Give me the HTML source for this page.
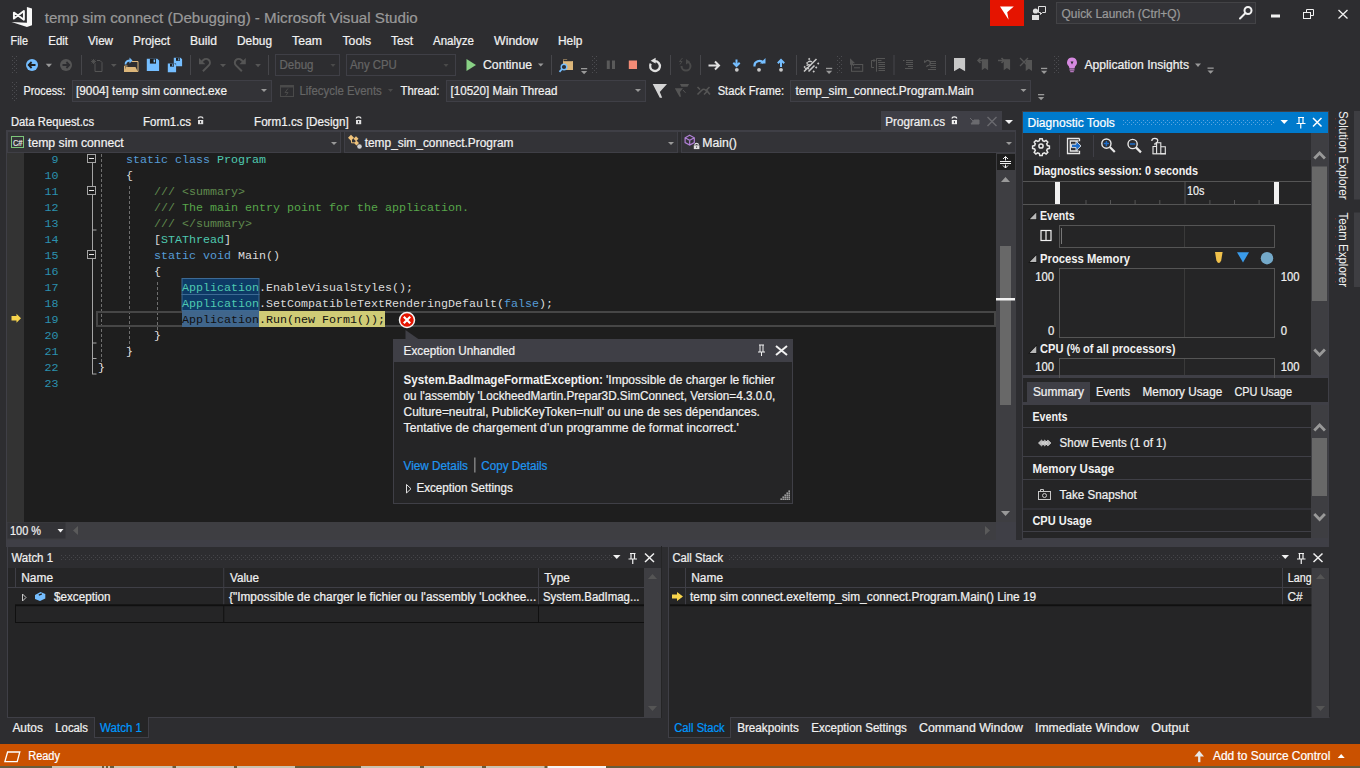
<!DOCTYPE html><html><head><meta charset="utf-8"><style>html,body{margin:0;padding:0;background:#2D2D30;overflow:hidden}svg{display:block}text{font-family:"Liberation Sans",sans-serif;white-space:pre}</style></head><body><svg width="1360" height="768" viewBox="0 0 1360 768"><rect x="0" y="0" width="1360" height="768" fill="#2D2D30" />
<path d="M26.9 6.9 L32 8.6 V25.2 L26.9 27 Z M11.5 22 L27 22.8 V27 Z" fill="#F8F8F8" />
<path d="M13.9 12.6 L23.9 19.8 V11 L13.9 18.6 Z" fill="none" stroke="#F8F8F8" stroke-width="1.9" stroke-linejoin="round"/>
<text x="44.7" y="23" font-size="15" fill="#999999" stroke="#999999" stroke-width="0.22" textLength="373" lengthAdjust="spacingAndGlyphs" >temp sim connect (Debugging) - Microsoft Visual Studio</text>
<rect x="990" y="0" width="34" height="26" fill="#E51400" />
<path d="M1000 6.6 H1013.8 L1007.2 12.3 L1008.6 19.8 Z" fill="#FFFFFF" />
<g fill="#E0E0E0"><circle cx="1035.5" cy="11" r="2.6"/><path d="M1032 20 v-5 h7 v5z"/></g>
<path d="M1038.5 6.5 h7 v6 h-3 l-2 2 v-2 h-2 z" fill="none" stroke="#E0E0E0" stroke-width="1" />
<rect x="1056.5" y="2.5" width="199" height="21" fill="#333337" stroke="#434346" stroke-width="1" />
<text x="1061.6" y="17.6" font-size="12" fill="#999999" stroke="#999999" stroke-width="0.22" textLength="119" lengthAdjust="spacingAndGlyphs" >Quick Launch (Ctrl+Q)</text>
<g stroke="#F1F1F1" fill="none" stroke-width="2"><circle cx="1248" cy="10.5" r="3.5"/><path d="M1245.5 13 L1240 18.5" stroke-linecap="round"/></g>
<rect x="1271" y="14.5" width="9" height="3" fill="#F1F1F1" />
<g fill="none" stroke="#F1F1F1" stroke-width="1"><rect x="1303.5" y="12.5" width="7" height="6"/><path d="M1306.5 12.5 V9.5 H1313.5 V15.5 H1310.5"/></g>
<g stroke="#F1F1F1" stroke-width="1.3"><path d="M1338.5 10 L1347.5 18.5 M1347.5 10 L1338.5 18.5"/></g>
<text x="10.5" y="45" font-size="12" fill="#F1F1F1" stroke="#F1F1F1" stroke-width="0.22" textLength="17.5" lengthAdjust="spacingAndGlyphs" >File</text>
<text x="48.25" y="45" font-size="12" fill="#F1F1F1" stroke="#F1F1F1" stroke-width="0.22" textLength="19.75" lengthAdjust="spacingAndGlyphs" >Edit</text>
<text x="88" y="45" font-size="12" fill="#F1F1F1" stroke="#F1F1F1" stroke-width="0.22" textLength="25" lengthAdjust="spacingAndGlyphs" >View</text>
<text x="133" y="45" font-size="12" fill="#F1F1F1" stroke="#F1F1F1" stroke-width="0.22" textLength="37" lengthAdjust="spacingAndGlyphs" >Project</text>
<text x="190" y="45" font-size="12" fill="#F1F1F1" stroke="#F1F1F1" stroke-width="0.22" textLength="27" lengthAdjust="spacingAndGlyphs" >Build</text>
<text x="237" y="45" font-size="12" fill="#F1F1F1" stroke="#F1F1F1" stroke-width="0.22" textLength="35" lengthAdjust="spacingAndGlyphs" >Debug</text>
<text x="292" y="45" font-size="12" fill="#F1F1F1" stroke="#F1F1F1" stroke-width="0.22" textLength="30" lengthAdjust="spacingAndGlyphs" >Team</text>
<text x="342.5" y="45" font-size="12" fill="#F1F1F1" stroke="#F1F1F1" stroke-width="0.22" textLength="28.5" lengthAdjust="spacingAndGlyphs" >Tools</text>
<text x="391" y="45" font-size="12" fill="#F1F1F1" stroke="#F1F1F1" stroke-width="0.22" textLength="22" lengthAdjust="spacingAndGlyphs" >Test</text>
<text x="433" y="45" font-size="12" fill="#F1F1F1" stroke="#F1F1F1" stroke-width="0.22" textLength="41" lengthAdjust="spacingAndGlyphs" >Analyze</text>
<text x="494" y="45" font-size="12" fill="#F1F1F1" stroke="#F1F1F1" stroke-width="0.22" textLength="44" lengthAdjust="spacingAndGlyphs" >Window</text>
<text x="558" y="45" font-size="12" fill="#F1F1F1" stroke="#F1F1F1" stroke-width="0.22" textLength="24.5" lengthAdjust="spacingAndGlyphs" >Help</text>
<rect x="12" y="56" width="1" height="1" fill="#4C4C50" />
<rect x="16" y="56" width="1" height="1" fill="#4C4C50" />
<rect x="14" y="58" width="1" height="1" fill="#4C4C50" />
<rect x="12" y="60" width="1" height="1" fill="#4C4C50" />
<rect x="16" y="60" width="1" height="1" fill="#4C4C50" />
<rect x="14" y="62" width="1" height="1" fill="#4C4C50" />
<rect x="12" y="64" width="1" height="1" fill="#4C4C50" />
<rect x="16" y="64" width="1" height="1" fill="#4C4C50" />
<rect x="14" y="66" width="1" height="1" fill="#4C4C50" />
<rect x="12" y="68" width="1" height="1" fill="#4C4C50" />
<rect x="16" y="68" width="1" height="1" fill="#4C4C50" />
<rect x="14" y="70" width="1" height="1" fill="#4C4C50" />
<rect x="12" y="72" width="1" height="1" fill="#4C4C50" />
<rect x="16" y="72" width="1" height="1" fill="#4C4C50" />
<circle cx="32" cy="65" r="6" fill="#75BEFF"/>
<path d="M29 65 h6.5 M31.6 62 L28.7 65 L31.6 68" fill="none" stroke="#1E1E1E" stroke-width="1.8" />
<path d="M45.8 63.7h6.2l-3.1 3.6z" fill="#999999" />
<circle cx="66" cy="65" r="6" fill="#555555"/>
<path d="M62.5 65 h6.5 M66.4 62 L69.3 65 L66.4 68" fill="none" stroke="#2D2D30" stroke-width="1.8" />
<line x1="81.5" y1="55" x2="81.5" y2="75" stroke="#46464A" stroke-width="1" />
<path d="M95 63.5 v8 h7 v-9 l-2 -2 h-3" fill="none" stroke="#555555" stroke-width="1" />
<path d="M91 61.5 h5 M93.5 59 v5 M91.7 59.7 l3.6 3.6 M95.3 59.7 l-3.6 3.6" fill="none" stroke="#555555" stroke-width="0.8" />
<path d="M110.9 64h5.8l-2.9 3z" fill="#555555" />
<path d="M131.5 61.5 h6.5 v10 h-2" fill="none" stroke="#DCB67A" stroke-width="1" />
<path d="M124.5 72 l1 -5 h10 l2.5 5z" fill="#DCB67A" />
<path d="M124.5 72 v-6 h3" fill="none" stroke="#DCB67A" stroke-width="1" />
<path d="M125.5 64.5 q0 -4 5 -4" fill="none" stroke="#75BEFF" stroke-width="1.8" />
<path d="M129.5 57.5 l3 3 l-3 3z" fill="#75BEFF" />
<path d="M146.8 58.8 h10.5 l1.8 1.8 v10.5 h-12.3z" fill="#75BEFF" />
<rect x="149.9" y="58.8" width="6.1" height="4.8" fill="#1E1E1E" />
<rect x="153.6" y="59.5" width="1.5" height="2.8" fill="#75BEFF" />
<path d="M173.8 57.8 h6.8 l1.5 1.5 v7 h-6 v-2.7 h-2.3z" fill="#75BEFF" />
<rect x="176" y="57.8" width="4" height="3" fill="#1E1E1E" />
<rect x="178.3" y="58.3" width="1" height="2" fill="#75BEFF" />
<path d="M167.8 63.6 h6.8 l1.5 1.5 v7.1 h-8.3z" fill="#75BEFF" />
<rect x="170" y="63.6" width="4" height="3" fill="#1E1E1E" />
<rect x="172.3" y="64.1" width="1" height="2" fill="#75BEFF" />
<line x1="190.5" y1="55" x2="190.5" y2="75" stroke="#46464A" stroke-width="1" />
<path d="M202.9 71.2 L208.8 65.4 A3.8 3.8 0 0 0 203.4 60 L201.5 61.9" fill="none" stroke="#555555" stroke-width="2" />
<path d="M199 58 V64.3 H205.3 Z" fill="#555555" />
<path d="M220 63.9h6l-3.0 3.3z" fill="#555555" />
<path d="M241.85 71.2 L235.95 65.4 A3.8 3.8 0 0 1 241.35 60 L243.25 61.9" fill="none" stroke="#555555" stroke-width="2" />
<path d="M245.75 58 V64.3 H239.45 Z" fill="#555555" />
<path d="M255.2 63.9h5.7l-2.85 3.3z" fill="#555555" />
<line x1="268.5" y1="55" x2="268.5" y2="75" stroke="#46464A" stroke-width="1" />
<rect x="275.5" y="54.5" width="64" height="21" fill="none" stroke="#3F3F46" stroke-width="1" />
<text x="279.5" y="69" font-size="12" fill="#656565" stroke="#656565" stroke-width="0.22" textLength="34" lengthAdjust="spacingAndGlyphs" >Debug</text>
<path d="M330.5 64h5l-2.5 3z" fill="#4A4A4A" />
<rect x="346.5" y="54.5" width="109" height="21" fill="none" stroke="#3F3F46" stroke-width="1" />
<text x="350" y="69" font-size="12" fill="#656565" stroke="#656565" stroke-width="0.22" textLength="46.75" lengthAdjust="spacingAndGlyphs" >Any CPU</text>
<path d="M443.5 64h5l-2.5 3z" fill="#4A4A4A" />
<path d="M466.5 59 L476 65 L466.5 71 Z" fill="#89D185" />
<text x="483" y="69" font-size="12" fill="#F1F1F1" stroke="#F1F1F1" stroke-width="0.22" textLength="49" lengthAdjust="spacingAndGlyphs" >Continue</text>
<path d="M538 63.5h5.5l-2.75 3z" fill="#999999" />
<line x1="551.5" y1="55" x2="551.5" y2="75" stroke="#46464A" stroke-width="1" />
<path d="M563 59.5 h4 l1 1.5 h5 v9 h-10z" fill="#DCB67A" />
<rect x="563.5" y="60" width="9" height="1.2" fill="#2D2D30" />
<circle cx="564" cy="67" r="2.8" fill="#2D2D30" stroke="#75BEFF" stroke-width="1.4"/>
<path d="M562 69 L559.5 71.8" fill="none" stroke="#75BEFF" stroke-width="1.8" />
<rect x="581" y="68" width="6.2" height="1.3" fill="#999999" />
<path d="M581 71h6.2l-3.1 3.2z" fill="#999999" />
<rect x="592" y="56" width="1" height="1" fill="#4C4C50" />
<rect x="596" y="56" width="1" height="1" fill="#4C4C50" />
<rect x="594" y="58" width="1" height="1" fill="#4C4C50" />
<rect x="592" y="60" width="1" height="1" fill="#4C4C50" />
<rect x="596" y="60" width="1" height="1" fill="#4C4C50" />
<rect x="594" y="62" width="1" height="1" fill="#4C4C50" />
<rect x="592" y="64" width="1" height="1" fill="#4C4C50" />
<rect x="596" y="64" width="1" height="1" fill="#4C4C50" />
<rect x="594" y="66" width="1" height="1" fill="#4C4C50" />
<rect x="592" y="68" width="1" height="1" fill="#4C4C50" />
<rect x="596" y="68" width="1" height="1" fill="#4C4C50" />
<rect x="594" y="70" width="1" height="1" fill="#4C4C50" />
<rect x="592" y="72" width="1" height="1" fill="#4C4C50" />
<rect x="596" y="72" width="1" height="1" fill="#4C4C50" />
<rect x="606.8" y="60.5" width="3" height="8.5" fill="#5A5A5A" />
<rect x="612" y="60.5" width="3" height="8.5" fill="#5A5A5A" />
<rect x="628.8" y="60.5" width="8.2" height="8.5" fill="#F38B76" />
<path d="M655 61.2 A4.9 4.9 0 1 1 650.76 63.65" fill="none" stroke="#E0E0E0" stroke-width="2.3" />
<path d="M650.6 60.7 L655.6 57.8 L655.6 63.6 Z" fill="#E0E0E0" />
<line x1="670.5" y1="55" x2="670.5" y2="75" stroke="#46464A" stroke-width="1" />
<path d="M686 61.6 A4.5 4.5 0 1 1 681.5 66.1" fill="none" stroke="#4A4A4A" stroke-width="2" />
<path d="M690 61.8 L686 59 L686 64.6 Z" fill="#4A4A4A" />
<path d="M682.5 58 l-3 3.5 h2.5 l-2 3" fill="none" stroke="#4A4A4A" stroke-width="1" />
<line x1="700.5" y1="55" x2="700.5" y2="75" stroke="#46464A" stroke-width="1" />
<path d="M708.5 65.5 H719 M715 61.5 L719 65.5 L715 69.5" fill="none" stroke="#E0E0E0" stroke-width="2" />
<path d="M736.5 59.5 V66 M733.3 62.8 L736.5 66 L739.7 62.8" fill="none" stroke="#75BEFF" stroke-width="2" />
<circle cx="736.8" cy="69.8" r="1.9" fill="#C8C8C8"/>
<path d="M754.5 66.5 A5 5 0 0 1 763.5 63" fill="none" stroke="#75BEFF" stroke-width="2.2" />
<path d="M760 63.5 h5.5 v-5.5z" fill="#75BEFF" />
<circle cx="759" cy="69.8" r="1.9" fill="#C8C8C8"/>
<path d="M781 67 V60 M777.8 63.2 L781 60 L784.2 63.2" fill="none" stroke="#75BEFF" stroke-width="2" />
<circle cx="781" cy="69.8" r="1.9" fill="#C8C8C8"/>
<line x1="796.5" y1="55" x2="796.5" y2="75" stroke="#46464A" stroke-width="1" />
<path d="M804 71.5 L816.5 59 M808.5 71.5 L814.5 65.5" fill="none" stroke="#C8C8C8" stroke-width="1.6" />
<path d="M808 62 q2 -1.5 4 0 M806.5 65.5 q2 -1.5 4 0 M805 69 q2 -1.5 4 0" fill="none" stroke="#C8C8C8" stroke-width="1.4" />
<path d="M808 59 l1.2 -1.2 l1.2 1.2 l-1.2 1.2z" fill="#C8C8C8" />
<path d="M806 63 l1.2 -1.2 l1.2 1.2 l-1.2 1.2z" fill="#C8C8C8" />
<path d="M803.5 67 l1.2 -1.2 l1.2 1.2 l-1.2 1.2z" fill="#C8C8C8" />
<path d="M817 63.5 l1.2 -1.2 l1.2 1.2 l-1.2 1.2z" fill="#C8C8C8" />
<path d="M815 67.5 l1.2 -1.2 l1.2 1.2 l-1.2 1.2z" fill="#C8C8C8" />
<path d="M812.5 71.5 l1.2 -1.2 l1.2 1.2 l-1.2 1.2z" fill="#C8C8C8" />
<rect x="826" y="67.8" width="6.2" height="1.3" fill="#999999" />
<path d="M826 70.8h6.2l-3.1 3.2z" fill="#999999" />
<rect x="837" y="56" width="1" height="1" fill="#4C4C50" />
<rect x="841" y="56" width="1" height="1" fill="#4C4C50" />
<rect x="839" y="58" width="1" height="1" fill="#4C4C50" />
<rect x="837" y="60" width="1" height="1" fill="#4C4C50" />
<rect x="841" y="60" width="1" height="1" fill="#4C4C50" />
<rect x="839" y="62" width="1" height="1" fill="#4C4C50" />
<rect x="837" y="64" width="1" height="1" fill="#4C4C50" />
<rect x="841" y="64" width="1" height="1" fill="#4C4C50" />
<rect x="839" y="66" width="1" height="1" fill="#4C4C50" />
<rect x="837" y="68" width="1" height="1" fill="#4C4C50" />
<rect x="841" y="68" width="1" height="1" fill="#4C4C50" />
<rect x="839" y="70" width="1" height="1" fill="#4C4C50" />
<rect x="837" y="72" width="1" height="1" fill="#4C4C50" />
<rect x="841" y="72" width="1" height="1" fill="#4C4C50" />
<path d="M850 58.3 v7 l1.8 -1.6 l1.3 2.3 l1 -0.5 l-1.3 -2.3 h2.4z" fill="#555555" />
<rect x="851.5" y="64.5" width="11.2" height="6.8" fill="none" stroke="#555555" stroke-width="1" />
<line x1="854" y1="67.8" x2="860" y2="67.8" stroke="#555555" stroke-width="1" />
<path d="M874 60.5 h-2.5 v7 h2.5 M872.5 60.5 h3 M874 59 v3" fill="none" stroke="#555555" stroke-width="1" />
<line x1="876.5" y1="58.3" x2="876.5" y2="71.7" stroke="#555555" stroke-width="1" />
<path d="M876.5 58.5 H885 M878 60.5 h3.5 M878 62.5 h7 M878.5 64.5 h6.5 M878.5 66.5 h6.5 M878.5 68.5 h6.5 M878.5 70.5 h6.5" fill="none" stroke="#555555" stroke-width="1" />
<line x1="894.0" y1="55" x2="894.0" y2="75" stroke="#46464A" stroke-width="1" />
<path d="M903 60.5 h1.5 M906 60.5 h7 M906 62.5 h7 M906 64.5 h7 M908 66.5 h5 M905 68.5 h8" fill="none" stroke="#555555" stroke-width="1" />
<path d="M925.5 62 A2.5 2.5 0 1 1 927.5 65.5 L926.5 67" fill="none" stroke="#555555" stroke-width="1.2" />
<path d="M924 60 l0 3 l2.5 -1z" fill="#555555" />
<path d="M930 61.5 h6 M930 63.5 h6 M930 65.5 h6 M930.5 67.5 h5.5 M928 69.5 h8" fill="none" stroke="#555555" stroke-width="1" />
<line x1="945.5" y1="55" x2="945.5" y2="75" stroke="#46464A" stroke-width="1" />
<path d="M954 57.9 h11.1 v13.4 l-5.55 -3.3 l-5.55 3.3z" fill="#C8C8C8" />
<path d="M981.8 59.2 h6.3 v11 l-3.15 -2.2 l-3.15 2.2z" fill="#555555" />
<path d="M984 60.5 h-6 M980.5 58 l-2.5 2.5 l2.5 2.5" fill="none" stroke="#555555" stroke-width="1.5" />
<path d="M1003.7 59.2 h6.4 v11 l-3.2 -2.2 l-3.2 2.2z" fill="#555555" />
<path d="M998 60.5 h6 M1001.5 58 l2.5 2.5 l-2.5 2.5" fill="none" stroke="#555555" stroke-width="1.5" />
<path d="M1025.7 60 h6.3 v11 l-3.15 -2.2 l-3.15 2.2z" fill="#555555" />
<path d="M1020 58 l8 8 M1028 58 l-8 8" fill="none" stroke="#555555" stroke-width="1.3" />
<rect x="1041" y="67.8" width="6.2" height="1.3" fill="#999999" />
<path d="M1041 70.8h6.2l-3.1 3.2z" fill="#999999" />
<rect x="1054" y="56" width="1" height="1" fill="#4C4C50" />
<rect x="1058" y="56" width="1" height="1" fill="#4C4C50" />
<rect x="1056" y="58" width="1" height="1" fill="#4C4C50" />
<rect x="1054" y="60" width="1" height="1" fill="#4C4C50" />
<rect x="1058" y="60" width="1" height="1" fill="#4C4C50" />
<rect x="1056" y="62" width="1" height="1" fill="#4C4C50" />
<rect x="1054" y="64" width="1" height="1" fill="#4C4C50" />
<rect x="1058" y="64" width="1" height="1" fill="#4C4C50" />
<rect x="1056" y="66" width="1" height="1" fill="#4C4C50" />
<rect x="1054" y="68" width="1" height="1" fill="#4C4C50" />
<rect x="1058" y="68" width="1" height="1" fill="#4C4C50" />
<rect x="1056" y="70" width="1" height="1" fill="#4C4C50" />
<rect x="1054" y="72" width="1" height="1" fill="#4C4C50" />
<rect x="1058" y="72" width="1" height="1" fill="#4C4C50" />
<path d="M1072 57.5 a5 5 0 0 1 3.2 8.8 l-0.7 2.2 h-5 l-0.7 -2.2 a5 5 0 0 1 3.2 -8.8z" fill="#D689E0" />
<path d="M1070.5 61.5 h3 l-1.5 3z" fill="#2D2D30" />
<rect x="1069.5" y="69.3" width="5" height="1.2" fill="#D689E0" />
<rect x="1070.2" y="71.2" width="3.6" height="1" fill="#D689E0" />
<text x="1084.4" y="68.75" font-size="12" fill="#F1F1F1" stroke="#F1F1F1" stroke-width="0.22" textLength="104.6" lengthAdjust="spacingAndGlyphs" >Application Insights</text>
<path d="M1195 63.5h6l-3.0 3.5z" fill="#999999" />
<rect x="1207.5" y="67.5" width="6.2" height="1.3" fill="#999999" />
<path d="M1207.5 70.5h6.2l-3.1 3.2z" fill="#999999" />
<rect x="12" y="82" width="1" height="1" fill="#4C4C50" />
<rect x="16" y="82" width="1" height="1" fill="#4C4C50" />
<rect x="14" y="84" width="1" height="1" fill="#4C4C50" />
<rect x="12" y="86" width="1" height="1" fill="#4C4C50" />
<rect x="16" y="86" width="1" height="1" fill="#4C4C50" />
<rect x="14" y="88" width="1" height="1" fill="#4C4C50" />
<rect x="12" y="90" width="1" height="1" fill="#4C4C50" />
<rect x="16" y="90" width="1" height="1" fill="#4C4C50" />
<rect x="14" y="92" width="1" height="1" fill="#4C4C50" />
<rect x="12" y="94" width="1" height="1" fill="#4C4C50" />
<rect x="16" y="94" width="1" height="1" fill="#4C4C50" />
<rect x="14" y="96" width="1" height="1" fill="#4C4C50" />
<rect x="12" y="98" width="1" height="1" fill="#4C4C50" />
<rect x="16" y="98" width="1" height="1" fill="#4C4C50" />
<rect x="14" y="100" width="1" height="1" fill="#4C4C50" />
<text x="23.5" y="95" font-size="12" fill="#F1F1F1" stroke="#F1F1F1" stroke-width="0.22" textLength="42" lengthAdjust="spacingAndGlyphs" >Process:</text>
<rect x="72.5" y="80.5" width="199" height="21" fill="#333337" stroke="#3F3F46" stroke-width="1" />
<text x="76" y="95" font-size="12" fill="#F1F1F1" stroke="#F1F1F1" stroke-width="0.22" textLength="151" lengthAdjust="spacingAndGlyphs" >[9004] temp sim connect.exe</text>
<path d="M261 89h6l-3.0 3z" fill="#999999" />
<rect x="280.5" y="85.5" width="13" height="11" fill="none" stroke="#4A4A4A" stroke-width="1" />
<rect x="280.5" y="85.5" width="13" height="2" fill="#4A4A4A" />
<path d="M288 88.5 l-3 4 h3 l-2 3" fill="none" stroke="#4A4A4A" stroke-width="1" />
<text x="299.5" y="95" font-size="12" fill="#656565" stroke="#656565" stroke-width="0.22" textLength="82.25" lengthAdjust="spacingAndGlyphs" >Lifecycle Events</text>
<path d="M388 89h5l-2.5 3z" fill="#4A4A4A" />
<text x="400.5" y="95" font-size="12" fill="#F1F1F1" stroke="#F1F1F1" stroke-width="0.22" textLength="39" lengthAdjust="spacingAndGlyphs" >Thread:</text>
<rect x="446.5" y="80.5" width="199" height="21" fill="#333337" stroke="#3F3F46" stroke-width="1" />
<text x="450.5" y="95" font-size="12" fill="#F1F1F1" stroke="#F1F1F1" stroke-width="0.22" textLength="107" lengthAdjust="spacingAndGlyphs" >[10520] Main Thread</text>
<path d="M635 89h6l-3.0 3z" fill="#999999" />
<path d="M652.7 84.1 H667 L659.8 92 L662.2 97.8 H659.8 Z" fill="#D4D4D4" />
<path d="M680 84 H689.1 L687.5 86.8 H681.4 Z" fill="#555555" />
<path d="M674.8 88.2 H683 L680 92 L681 96.8 H679.5 Z" fill="#555555" />
<path d="M683 90 L685.5 92.8" fill="none" stroke="#555555" stroke-width="1" />
<path d="M697.5 87 L700 89.5 M697.5 94.5 L701.5 90.5 Q704 88 706 90.5 L709.5 87 M704 94.5 L708 90.5 M707.5 91.5 L710 94.5" fill="none" stroke="#555555" stroke-width="1.6" />
<text x="717.7" y="95" font-size="12" fill="#F1F1F1" stroke="#F1F1F1" stroke-width="0.22" textLength="66.3" lengthAdjust="spacingAndGlyphs" >Stack Frame:</text>
<rect x="790.5" y="80.5" width="240" height="21" fill="#333337" stroke="#3F3F46" stroke-width="1" />
<text x="795.5" y="95" font-size="12" fill="#F1F1F1" stroke="#F1F1F1" stroke-width="0.22" textLength="178.2" lengthAdjust="spacingAndGlyphs" >temp_sim_connect.Program.Main</text>
<path d="M1020.5 89h6l-3.0 3z" fill="#999999" />
<rect x="1038" y="94" width="6.2" height="1.3" fill="#999999" />
<path d="M1038 97h6.2l-3.1 3.2z" fill="#999999" />
<text x="11" y="126" font-size="12" fill="#F1F1F1" stroke="#F1F1F1" stroke-width="0.22" textLength="83" lengthAdjust="spacingAndGlyphs" >Data Request.cs</text>
<text x="143" y="126" font-size="12" fill="#F1F1F1" stroke="#F1F1F1" stroke-width="0.22" textLength="48" lengthAdjust="spacingAndGlyphs" >Form1.cs</text>
<path d="M198.3 118.6 a2.3 1.8 0 0 1 4.6 0" fill="none" stroke="#E0E0E0" stroke-width="1.3" />
<rect x="198" y="120" width="5.2" height="4.2" fill="#E0E0E0" />
<rect x="200.1" y="121" width="1" height="2.2" fill="#2D2D30" />
<text x="254" y="126" font-size="12" fill="#F1F1F1" stroke="#F1F1F1" stroke-width="0.22" textLength="94.7" lengthAdjust="spacingAndGlyphs" >Form1.cs [Design]</text>
<path d="M356.3 118.6 a2.3 1.8 0 0 1 4.6 0" fill="none" stroke="#E0E0E0" stroke-width="1.3" />
<rect x="356" y="120" width="5.2" height="4.2" fill="#E0E0E0" />
<rect x="358.1" y="121" width="1" height="2.2" fill="#2D2D30" />
<rect x="881" y="111" width="121" height="19" fill="#3F3F46" />
<text x="885.3" y="126" font-size="12" fill="#F1F1F1" stroke="#F1F1F1" stroke-width="0.22" textLength="59.7" lengthAdjust="spacingAndGlyphs" >Program.cs</text>
<path d="M952.0999999999999 118.6 a2.3 1.8 0 0 1 4.6 0" fill="none" stroke="#F1F1F1" stroke-width="1.3" />
<rect x="951.8" y="120" width="5.2" height="4.2" fill="#F1F1F1" />
<rect x="953.9" y="121" width="1" height="2.2" fill="#3F3F46" />
<path d="M970 118 l3 3 M971 124 h8 v-4 h-5z" fill="#6A6A6F" stroke="#6A6A6F" stroke-width="1" />
<path d="M987.5 117 L996.5 126 M996.5 117 L987.5 126" fill="none" stroke="#6A6A6F" stroke-width="1.4" />
<path d="M1005 120 h8 l-4 4z" fill="#F1F1F1" />
<rect x="6" y="130" width="1010" height="411" fill="#3F3F46" />
<rect x="7" y="132" width="1009" height="21" fill="#2D2D30" />
<rect x="7.5" y="131.5" width="333" height="21" fill="#333337" stroke="#3F3F46" stroke-width="1" />
<rect x="344.5" y="131.5" width="333" height="21" fill="#333337" stroke="#3F3F46" stroke-width="1" />
<rect x="681.5" y="131.5" width="334" height="21" fill="#333337" stroke="#3F3F46" stroke-width="1" />
<rect x="11.5" y="136.5" width="12" height="11" fill="none" stroke="#7CC57A" stroke-width="1" />
<text x="13" y="146" font-size="9" fill="#E0E0E0" stroke="#E0E0E0" stroke-width="0.22" textLength="9.5" lengthAdjust="spacingAndGlyphs" >C#</text>
<text x="28" y="147" font-size="12" fill="#F1F1F1" stroke="#F1F1F1" stroke-width="0.22" textLength="95.75" lengthAdjust="spacingAndGlyphs" >temp sim connect</text>
<path d="M331 142h6l-3.0 3z" fill="#999999" />
<path d="M348 137.8 l3 -3 l3 3 l-3 3z M353.5 138.7 l2.5 -2.5 l2.5 2.5 l-2.5 2.5z M354 143 l2.5 -2.5 l2.5 2.5 l-2.5 2.5z" fill="#EFC27A" />
<path d="M351.5 140 v2.8 h3" fill="none" stroke="#EFC27A" stroke-width="1" />
<circle cx="359.5" cy="146.5" r="2.3" fill="#D0D0D0"/>
<text x="364.7" y="147" font-size="12" fill="#F1F1F1" stroke="#F1F1F1" stroke-width="0.22" textLength="148.8" lengthAdjust="spacingAndGlyphs" >temp_sim_connect.Program</text>
<path d="M668 142h6l-3.0 3z" fill="#999999" />
<path d="M689.7 135.3 L694.3 137.8 V142.6 L689.7 145.1 L685.1 142.6 V137.8 Z M685.1 137.8 L689.7 140.3 L694.3 137.8 M689.7 140.3 V145" fill="none" stroke="#B180D7" stroke-width="1.2" />
<path d="M694.8 145 a1.8 1.6 0 0 1 3.6 0" fill="none" stroke="#E0E0E0" stroke-width="1.1" />
<rect x="693.8" y="145.3" width="5.6" height="3.8" fill="#E0E0E0" />
<rect x="696.2" y="146.5" width="0.9" height="1.3" fill="#333337" />
<text x="702.2" y="147" font-size="12" fill="#F1F1F1" stroke="#F1F1F1" stroke-width="0.22" textLength="34.7" lengthAdjust="spacingAndGlyphs" >Main()</text>
<path d="M1006 142h6l-3.0 3z" fill="#999999" />
<rect x="7" y="153" width="990" height="369" fill="#1E1E1E" />
<rect x="7" y="153" width="17" height="369" fill="#333333" />
<rect x="996" y="153" width="20" height="369" fill="#3E3E42" />
<rect x="997" y="154" width="18" height="16" fill="#1E1E1E" />
<path d="M1005.5 156.5 V160.5 M1005.5 164.5 V168 M1003 159 L1005.5 156.5 L1008 159 M1003 165.5 L1005.5 168 L1008 165.5 M1000 161.5 H1011 M1000 163.5 H1011" fill="none" stroke="#F1F1F1" stroke-width="1" />
<path d="M1001 182 l4.5 -5 l4.5 5z" fill="#999999" />
<rect x="1000" y="246" width="11" height="159" fill="#686868" />
<rect x="996" y="298" width="19" height="2.5" fill="#F1F1F1" />
<path d="M1001 511 h9 l-4.5 5z" fill="#999999" />
<rect x="7" y="522" width="989" height="19" fill="#3E3E42" />
<rect x="7.5" y="522.5" width="58" height="16" fill="#333337" />
<text x="10" y="535" font-size="12" fill="#F1F1F1" stroke="#F1F1F1" stroke-width="0.22" textLength="31" lengthAdjust="spacingAndGlyphs" >100 %</text>
<path d="M57.5 529h6l-3.0 3.5z" fill="#F1F1F1" />
<path d="M78 526 v9 l-5 -4.5z" fill="#5A5A5A" />
<path d="M985 526 v9 l5 -4.5z" fill="#5A5A5A" />
<path d="M11.5 316 h5 v-2.3 l4.5 4.5 l-4.5 4.5 v-2.3 h-5z" fill="#FFCC00" style="fill:#F7D44C"/>
<line x1="92.5" y1="163" x2="92.5" y2="374" stroke="#A5A5A5" stroke-width="1" />
<line x1="92" y1="230" x2="96.5" y2="230" stroke="#A5A5A5" stroke-width="1" />
<line x1="92" y1="343" x2="96.5" y2="343" stroke="#A5A5A5" stroke-width="1" />
<line x1="92" y1="358.5" x2="96.5" y2="358.5" stroke="#A5A5A5" stroke-width="1" />
<line x1="92" y1="374" x2="96.5" y2="374" stroke="#A5A5A5" stroke-width="1" />
<rect x="87.5" y="154.5" width="8" height="8" fill="#1E1E1E" stroke="#A5A5A5" stroke-width="1" />
<line x1="89" y1="158.5" x2="94" y2="158.5" stroke="#E8E8E8" stroke-width="1" />
<rect x="87.5" y="186.5" width="8" height="8" fill="#1E1E1E" stroke="#A5A5A5" stroke-width="1" />
<line x1="89" y1="190.5" x2="94" y2="190.5" stroke="#E8E8E8" stroke-width="1" />
<rect x="87.5" y="250.5" width="8" height="8" fill="#1E1E1E" stroke="#A5A5A5" stroke-width="1" />
<line x1="89" y1="254.5" x2="94" y2="254.5" stroke="#E8E8E8" stroke-width="1" />
<line x1="101.5" y1="154" x2="101.5" y2="373" stroke="#6E6E6E" stroke-width="1" stroke-dasharray="3,2"/>
<line x1="129.5" y1="186" x2="129.5" y2="357" stroke="#6E6E6E" stroke-width="1" stroke-dasharray="3,2"/>
<line x1="157.5" y1="282" x2="157.5" y2="341" stroke="#6E6E6E" stroke-width="1" stroke-dasharray="3,2"/>
<rect x="97" y="312" width="898" height="14" fill="none" stroke="#464646" stroke-width="2" />
<rect x="182" y="278.5" width="77" height="16" fill="#0E3A66" stroke="#3D6A94" stroke-width="1" />
<rect x="182" y="294.5" width="77" height="16" fill="#0E3A66" stroke="#3D6A94" stroke-width="1" />
<rect x="182" y="311" width="77" height="16" fill="#40668C" />
<rect x="259" y="311" width="126" height="16" fill="#CFCB76" />
<text x="51.5" y="162.5" font-size="11.2" fill="#2B91AF" style='font-family:"Liberation Mono", monospace' textLength="7.0" lengthAdjust="spacingAndGlyphs" >9</text>
<text x="44.5" y="178.5" font-size="11.2" fill="#2B91AF" style='font-family:"Liberation Mono", monospace' textLength="14.0" lengthAdjust="spacingAndGlyphs" >10</text>
<text x="44.5" y="194.5" font-size="11.2" fill="#2B91AF" style='font-family:"Liberation Mono", monospace' textLength="14.0" lengthAdjust="spacingAndGlyphs" >11</text>
<text x="44.5" y="210.5" font-size="11.2" fill="#2B91AF" style='font-family:"Liberation Mono", monospace' textLength="14.0" lengthAdjust="spacingAndGlyphs" >12</text>
<text x="44.5" y="226.5" font-size="11.2" fill="#2B91AF" style='font-family:"Liberation Mono", monospace' textLength="14.0" lengthAdjust="spacingAndGlyphs" >13</text>
<text x="44.5" y="242.5" font-size="11.2" fill="#2B91AF" style='font-family:"Liberation Mono", monospace' textLength="14.0" lengthAdjust="spacingAndGlyphs" >14</text>
<text x="44.5" y="258.5" font-size="11.2" fill="#2B91AF" style='font-family:"Liberation Mono", monospace' textLength="14.0" lengthAdjust="spacingAndGlyphs" >15</text>
<text x="44.5" y="274.5" font-size="11.2" fill="#2B91AF" style='font-family:"Liberation Mono", monospace' textLength="14.0" lengthAdjust="spacingAndGlyphs" >16</text>
<text x="44.5" y="290.5" font-size="11.2" fill="#2B91AF" style='font-family:"Liberation Mono", monospace' textLength="14.0" lengthAdjust="spacingAndGlyphs" >17</text>
<text x="44.5" y="306.5" font-size="11.2" fill="#2B91AF" style='font-family:"Liberation Mono", monospace' textLength="14.0" lengthAdjust="spacingAndGlyphs" >18</text>
<text x="44.5" y="322.5" font-size="11.2" fill="#2B91AF" style='font-family:"Liberation Mono", monospace' textLength="14.0" lengthAdjust="spacingAndGlyphs" >19</text>
<text x="44.5" y="338.5" font-size="11.2" fill="#2B91AF" style='font-family:"Liberation Mono", monospace' textLength="14.0" lengthAdjust="spacingAndGlyphs" >20</text>
<text x="44.5" y="354.5" font-size="11.2" fill="#2B91AF" style='font-family:"Liberation Mono", monospace' textLength="14.0" lengthAdjust="spacingAndGlyphs" >21</text>
<text x="44.5" y="370.5" font-size="11.2" fill="#2B91AF" style='font-family:"Liberation Mono", monospace' textLength="14.0" lengthAdjust="spacingAndGlyphs" >22</text>
<text x="44.5" y="386.5" font-size="11.2" fill="#2B91AF" style='font-family:"Liberation Mono", monospace' textLength="14.0" lengthAdjust="spacingAndGlyphs" >23</text>
<text x="126.0" y="162.5" font-size="11.2" fill="#569CD6" style='font-family:"Liberation Mono", monospace' textLength="42.0" lengthAdjust="spacingAndGlyphs" >static</text>
<text x="175.0" y="162.5" font-size="11.2" fill="#569CD6" style='font-family:"Liberation Mono", monospace' textLength="35.0" lengthAdjust="spacingAndGlyphs" >class</text>
<text x="217.0" y="162.5" font-size="11.2" fill="#4EC9B0" style='font-family:"Liberation Mono", monospace' textLength="49.0" lengthAdjust="spacingAndGlyphs" >Program</text>
<text x="126.0" y="178.5" font-size="11.2" fill="#DCDCDC" style='font-family:"Liberation Mono", monospace' textLength="7.0" lengthAdjust="spacingAndGlyphs" >{</text>
<text x="154.0" y="194.5" font-size="11.2" fill="#608B4E" style='font-family:"Liberation Mono", monospace' textLength="21.0" lengthAdjust="spacingAndGlyphs" >///</text>
<text x="182.0" y="194.5" font-size="11.2" fill="#608B4E" style='font-family:"Liberation Mono", monospace' textLength="63.0" lengthAdjust="spacingAndGlyphs" >&lt;summary&gt;</text>
<text x="154.0" y="210.5" font-size="11.2" fill="#608B4E" style='font-family:"Liberation Mono", monospace' textLength="21.0" lengthAdjust="spacingAndGlyphs" >///</text>
<text x="182.0" y="210.5" font-size="11.2" fill="#57A64A" style='font-family:"Liberation Mono", monospace' textLength="287.0" lengthAdjust="spacingAndGlyphs" >The main entry point for the application.</text>
<text x="154.0" y="226.5" font-size="11.2" fill="#608B4E" style='font-family:"Liberation Mono", monospace' textLength="21.0" lengthAdjust="spacingAndGlyphs" >///</text>
<text x="182.0" y="226.5" font-size="11.2" fill="#608B4E" style='font-family:"Liberation Mono", monospace' textLength="70.0" lengthAdjust="spacingAndGlyphs" >&lt;/summary&gt;</text>
<text x="154.0" y="242.5" font-size="11.2" fill="#DCDCDC" style='font-family:"Liberation Mono", monospace' textLength="7.0" lengthAdjust="spacingAndGlyphs" >[</text>
<text x="161.0" y="242.5" font-size="11.2" fill="#4EC9B0" style='font-family:"Liberation Mono", monospace' textLength="63.0" lengthAdjust="spacingAndGlyphs" >STAThread</text>
<text x="224.0" y="242.5" font-size="11.2" fill="#DCDCDC" style='font-family:"Liberation Mono", monospace' textLength="7.0" lengthAdjust="spacingAndGlyphs" >]</text>
<text x="154.0" y="258.5" font-size="11.2" fill="#569CD6" style='font-family:"Liberation Mono", monospace' textLength="42.0" lengthAdjust="spacingAndGlyphs" >static</text>
<text x="203.0" y="258.5" font-size="11.2" fill="#569CD6" style='font-family:"Liberation Mono", monospace' textLength="28.0" lengthAdjust="spacingAndGlyphs" >void</text>
<text x="238.0" y="258.5" font-size="11.2" fill="#DCDCDC" style='font-family:"Liberation Mono", monospace' textLength="42.0" lengthAdjust="spacingAndGlyphs" >Main()</text>
<text x="154.0" y="274.5" font-size="11.2" fill="#DCDCDC" style='font-family:"Liberation Mono", monospace' textLength="7.0" lengthAdjust="spacingAndGlyphs" >{</text>
<text x="182.0" y="290.5" font-size="11.2" fill="#4EC9B0" style='font-family:"Liberation Mono", monospace' textLength="77.0" lengthAdjust="spacingAndGlyphs" >Application</text>
<text x="259.0" y="290.5" font-size="11.2" fill="#DCDCDC" style='font-family:"Liberation Mono", monospace' textLength="154.0" lengthAdjust="spacingAndGlyphs" >.EnableVisualStyles();</text>
<text x="182.0" y="306.5" font-size="11.2" fill="#4EC9B0" style='font-family:"Liberation Mono", monospace' textLength="77.0" lengthAdjust="spacingAndGlyphs" >Application</text>
<text x="259.0" y="306.5" font-size="11.2" fill="#DCDCDC" style='font-family:"Liberation Mono", monospace' textLength="245.0" lengthAdjust="spacingAndGlyphs" >.SetCompatibleTextRenderingDefault(</text>
<text x="504.0" y="306.5" font-size="11.2" fill="#569CD6" style='font-family:"Liberation Mono", monospace' textLength="35.0" lengthAdjust="spacingAndGlyphs" >false</text>
<text x="539.0" y="306.5" font-size="11.2" fill="#DCDCDC" style='font-family:"Liberation Mono", monospace' textLength="14.0" lengthAdjust="spacingAndGlyphs" >);</text>
<text x="182.0" y="322.5" font-size="11.2" fill="#101010" style='font-family:"Liberation Mono", monospace' textLength="203.0" lengthAdjust="spacingAndGlyphs" >Application.Run(new Form1());</text>
<text x="154.0" y="338.5" font-size="11.2" fill="#DCDCDC" style='font-family:"Liberation Mono", monospace' textLength="7.0" lengthAdjust="spacingAndGlyphs" >}</text>
<text x="126.0" y="354.5" font-size="11.2" fill="#DCDCDC" style='font-family:"Liberation Mono", monospace' textLength="7.0" lengthAdjust="spacingAndGlyphs" >}</text>
<text x="98.0" y="370.5" font-size="11.2" fill="#DCDCDC" style='font-family:"Liberation Mono", monospace' textLength="7.0" lengthAdjust="spacingAndGlyphs" >}</text>
<circle cx="407" cy="320" r="7.5" fill="#E51400" stroke="#F5F5F5" stroke-width="1.5"/>
<path d="M403.8 316.8 L410.2 323.2 M410.2 316.8 L403.8 323.2" fill="none" stroke="#FFFFFF" stroke-width="2.2" />
<path d="M405.5 330 L405.5 339.5 L419 339.5 Z" fill="#3F3F46" />
<rect x="393.5" y="339.5" width="399" height="164" fill="#252526" stroke="#3F3F46" stroke-width="1" />
<rect x="394" y="340" width="398" height="22" fill="#3F3F46" />
<text x="403.6" y="354.7" font-size="12" fill="#F1F1F1" stroke="#F1F1F1" stroke-width="0.22" textLength="111.4" lengthAdjust="spacingAndGlyphs" >Exception Unhandled</text>
<path d="M759 345 h5 M760 345 v7 M763 345 v7 M758 352 h7 M761.5 352 v4" fill="none" stroke="#F1F1F1" stroke-width="1" />
<path d="M776 346 L787 355 M787 346 L776 355" fill="none" stroke="#F1F1F1" stroke-width="2" />
<text x="403.6" y="384" font-size="12" fill="#F1F1F1" font-weight="bold" textLength="199.4" lengthAdjust="spacingAndGlyphs" >System.BadImageFormatException:</text>
<text x="606" y="384" font-size="12" fill="#F1F1F1" stroke="#F1F1F1" stroke-width="0.22" textLength="168.7" lengthAdjust="spacingAndGlyphs" >&#x27;Impossible de charger le fichier</text>
<text x="403.6" y="400" font-size="12" fill="#F1F1F1" stroke="#F1F1F1" stroke-width="0.22" textLength="371.7" lengthAdjust="spacingAndGlyphs" >ou l&#x27;assembly &#x27;LockheedMartin.Prepar3D.SimConnect, Version=4.3.0.0,</text>
<text x="403.6" y="416" font-size="12" fill="#F1F1F1" stroke="#F1F1F1" stroke-width="0.22" textLength="356.3" lengthAdjust="spacingAndGlyphs" >Culture=neutral, PublicKeyToken=null&#x27; ou une de ses dépendances.</text>
<text x="403.6" y="432" font-size="12" fill="#F1F1F1" stroke="#F1F1F1" stroke-width="0.22" textLength="335.3" lengthAdjust="spacingAndGlyphs" >Tentative de chargement d’un programme de format incorrect.&#x27;</text>
<text x="403.6" y="470" font-size="12" fill="#1F95F0" stroke="#1F95F0" stroke-width="0.22" textLength="64.4" lengthAdjust="spacingAndGlyphs" >View Details</text>
<rect x="474" y="457.5" width="1.6" height="15" fill="#7A7A7A" />
<text x="481.3" y="470" font-size="12" fill="#1F95F0" stroke="#1F95F0" stroke-width="0.22" textLength="66.1" lengthAdjust="spacingAndGlyphs" >Copy Details</text>
<path d="M406.5 484.5 v8.5 l4.5 -4.25z" fill="none" stroke="#E0E0E0" stroke-width="1" />
<text x="416.4" y="492" font-size="12" fill="#F1F1F1" stroke="#F1F1F1" stroke-width="0.22" textLength="96.4" lengthAdjust="spacingAndGlyphs" >Exception Settings</text>
<rect x="788.5" y="490.5" width="1.3" height="1.3" fill="#E0E0E0" />
<rect x="786.5" y="492.5" width="1.3" height="1.3" fill="#E0E0E0" />
<rect x="788.5" y="492.5" width="1.3" height="1.3" fill="#E0E0E0" />
<rect x="784.5" y="494.5" width="1.3" height="1.3" fill="#E0E0E0" />
<rect x="786.5" y="494.5" width="1.3" height="1.3" fill="#E0E0E0" />
<rect x="788.5" y="494.5" width="1.3" height="1.3" fill="#E0E0E0" />
<rect x="782.5" y="496.5" width="1.3" height="1.3" fill="#E0E0E0" />
<rect x="784.5" y="496.5" width="1.3" height="1.3" fill="#E0E0E0" />
<rect x="786.5" y="496.5" width="1.3" height="1.3" fill="#E0E0E0" />
<rect x="788.5" y="496.5" width="1.3" height="1.3" fill="#E0E0E0" />
<rect x="780.5" y="498.5" width="1.3" height="1.3" fill="#E0E0E0" />
<rect x="782.5" y="498.5" width="1.3" height="1.3" fill="#E0E0E0" />
<rect x="784.5" y="498.5" width="1.3" height="1.3" fill="#E0E0E0" />
<rect x="786.5" y="498.5" width="1.3" height="1.3" fill="#E0E0E0" />
<rect x="788.5" y="498.5" width="1.3" height="1.3" fill="#E0E0E0" />
<rect x="1022" y="111" width="307" height="430" fill="#3F3F46" />
<rect x="1023" y="112" width="305" height="21" fill="#007ACC" />
<text x="1027.5" y="126.6" font-size="12" fill="#FFFFFF" stroke="#FFFFFF" stroke-width="0.22" textLength="87.4" lengthAdjust="spacingAndGlyphs" >Diagnostic Tools</text>
<rect x="1123" y="120" width="1" height="1" fill="#5AA5E0" />
<rect x="1125" y="122" width="1" height="1" fill="#5AA5E0" />
<rect x="1123" y="124" width="1" height="1" fill="#5AA5E0" />
<rect x="1127" y="120" width="1" height="1" fill="#5AA5E0" />
<rect x="1129" y="122" width="1" height="1" fill="#5AA5E0" />
<rect x="1127" y="124" width="1" height="1" fill="#5AA5E0" />
<rect x="1131" y="120" width="1" height="1" fill="#5AA5E0" />
<rect x="1133" y="122" width="1" height="1" fill="#5AA5E0" />
<rect x="1131" y="124" width="1" height="1" fill="#5AA5E0" />
<rect x="1135" y="120" width="1" height="1" fill="#5AA5E0" />
<rect x="1137" y="122" width="1" height="1" fill="#5AA5E0" />
<rect x="1135" y="124" width="1" height="1" fill="#5AA5E0" />
<rect x="1139" y="120" width="1" height="1" fill="#5AA5E0" />
<rect x="1141" y="122" width="1" height="1" fill="#5AA5E0" />
<rect x="1139" y="124" width="1" height="1" fill="#5AA5E0" />
<rect x="1143" y="120" width="1" height="1" fill="#5AA5E0" />
<rect x="1145" y="122" width="1" height="1" fill="#5AA5E0" />
<rect x="1143" y="124" width="1" height="1" fill="#5AA5E0" />
<rect x="1147" y="120" width="1" height="1" fill="#5AA5E0" />
<rect x="1149" y="122" width="1" height="1" fill="#5AA5E0" />
<rect x="1147" y="124" width="1" height="1" fill="#5AA5E0" />
<rect x="1151" y="120" width="1" height="1" fill="#5AA5E0" />
<rect x="1153" y="122" width="1" height="1" fill="#5AA5E0" />
<rect x="1151" y="124" width="1" height="1" fill="#5AA5E0" />
<rect x="1155" y="120" width="1" height="1" fill="#5AA5E0" />
<rect x="1157" y="122" width="1" height="1" fill="#5AA5E0" />
<rect x="1155" y="124" width="1" height="1" fill="#5AA5E0" />
<rect x="1159" y="120" width="1" height="1" fill="#5AA5E0" />
<rect x="1161" y="122" width="1" height="1" fill="#5AA5E0" />
<rect x="1159" y="124" width="1" height="1" fill="#5AA5E0" />
<rect x="1163" y="120" width="1" height="1" fill="#5AA5E0" />
<rect x="1165" y="122" width="1" height="1" fill="#5AA5E0" />
<rect x="1163" y="124" width="1" height="1" fill="#5AA5E0" />
<rect x="1167" y="120" width="1" height="1" fill="#5AA5E0" />
<rect x="1169" y="122" width="1" height="1" fill="#5AA5E0" />
<rect x="1167" y="124" width="1" height="1" fill="#5AA5E0" />
<rect x="1171" y="120" width="1" height="1" fill="#5AA5E0" />
<rect x="1173" y="122" width="1" height="1" fill="#5AA5E0" />
<rect x="1171" y="124" width="1" height="1" fill="#5AA5E0" />
<rect x="1175" y="120" width="1" height="1" fill="#5AA5E0" />
<rect x="1177" y="122" width="1" height="1" fill="#5AA5E0" />
<rect x="1175" y="124" width="1" height="1" fill="#5AA5E0" />
<rect x="1179" y="120" width="1" height="1" fill="#5AA5E0" />
<rect x="1181" y="122" width="1" height="1" fill="#5AA5E0" />
<rect x="1179" y="124" width="1" height="1" fill="#5AA5E0" />
<rect x="1183" y="120" width="1" height="1" fill="#5AA5E0" />
<rect x="1185" y="122" width="1" height="1" fill="#5AA5E0" />
<rect x="1183" y="124" width="1" height="1" fill="#5AA5E0" />
<rect x="1187" y="120" width="1" height="1" fill="#5AA5E0" />
<rect x="1189" y="122" width="1" height="1" fill="#5AA5E0" />
<rect x="1187" y="124" width="1" height="1" fill="#5AA5E0" />
<rect x="1191" y="120" width="1" height="1" fill="#5AA5E0" />
<rect x="1193" y="122" width="1" height="1" fill="#5AA5E0" />
<rect x="1191" y="124" width="1" height="1" fill="#5AA5E0" />
<rect x="1195" y="120" width="1" height="1" fill="#5AA5E0" />
<rect x="1197" y="122" width="1" height="1" fill="#5AA5E0" />
<rect x="1195" y="124" width="1" height="1" fill="#5AA5E0" />
<rect x="1199" y="120" width="1" height="1" fill="#5AA5E0" />
<rect x="1201" y="122" width="1" height="1" fill="#5AA5E0" />
<rect x="1199" y="124" width="1" height="1" fill="#5AA5E0" />
<rect x="1203" y="120" width="1" height="1" fill="#5AA5E0" />
<rect x="1205" y="122" width="1" height="1" fill="#5AA5E0" />
<rect x="1203" y="124" width="1" height="1" fill="#5AA5E0" />
<rect x="1207" y="120" width="1" height="1" fill="#5AA5E0" />
<rect x="1209" y="122" width="1" height="1" fill="#5AA5E0" />
<rect x="1207" y="124" width="1" height="1" fill="#5AA5E0" />
<rect x="1211" y="120" width="1" height="1" fill="#5AA5E0" />
<rect x="1213" y="122" width="1" height="1" fill="#5AA5E0" />
<rect x="1211" y="124" width="1" height="1" fill="#5AA5E0" />
<rect x="1215" y="120" width="1" height="1" fill="#5AA5E0" />
<rect x="1217" y="122" width="1" height="1" fill="#5AA5E0" />
<rect x="1215" y="124" width="1" height="1" fill="#5AA5E0" />
<rect x="1219" y="120" width="1" height="1" fill="#5AA5E0" />
<rect x="1221" y="122" width="1" height="1" fill="#5AA5E0" />
<rect x="1219" y="124" width="1" height="1" fill="#5AA5E0" />
<rect x="1223" y="120" width="1" height="1" fill="#5AA5E0" />
<rect x="1225" y="122" width="1" height="1" fill="#5AA5E0" />
<rect x="1223" y="124" width="1" height="1" fill="#5AA5E0" />
<rect x="1227" y="120" width="1" height="1" fill="#5AA5E0" />
<rect x="1229" y="122" width="1" height="1" fill="#5AA5E0" />
<rect x="1227" y="124" width="1" height="1" fill="#5AA5E0" />
<rect x="1231" y="120" width="1" height="1" fill="#5AA5E0" />
<rect x="1233" y="122" width="1" height="1" fill="#5AA5E0" />
<rect x="1231" y="124" width="1" height="1" fill="#5AA5E0" />
<rect x="1235" y="120" width="1" height="1" fill="#5AA5E0" />
<rect x="1237" y="122" width="1" height="1" fill="#5AA5E0" />
<rect x="1235" y="124" width="1" height="1" fill="#5AA5E0" />
<rect x="1239" y="120" width="1" height="1" fill="#5AA5E0" />
<rect x="1241" y="122" width="1" height="1" fill="#5AA5E0" />
<rect x="1239" y="124" width="1" height="1" fill="#5AA5E0" />
<rect x="1243" y="120" width="1" height="1" fill="#5AA5E0" />
<rect x="1245" y="122" width="1" height="1" fill="#5AA5E0" />
<rect x="1243" y="124" width="1" height="1" fill="#5AA5E0" />
<rect x="1247" y="120" width="1" height="1" fill="#5AA5E0" />
<rect x="1249" y="122" width="1" height="1" fill="#5AA5E0" />
<rect x="1247" y="124" width="1" height="1" fill="#5AA5E0" />
<rect x="1251" y="120" width="1" height="1" fill="#5AA5E0" />
<rect x="1253" y="122" width="1" height="1" fill="#5AA5E0" />
<rect x="1251" y="124" width="1" height="1" fill="#5AA5E0" />
<rect x="1255" y="120" width="1" height="1" fill="#5AA5E0" />
<rect x="1257" y="122" width="1" height="1" fill="#5AA5E0" />
<rect x="1255" y="124" width="1" height="1" fill="#5AA5E0" />
<rect x="1259" y="120" width="1" height="1" fill="#5AA5E0" />
<rect x="1261" y="122" width="1" height="1" fill="#5AA5E0" />
<rect x="1259" y="124" width="1" height="1" fill="#5AA5E0" />
<rect x="1263" y="120" width="1" height="1" fill="#5AA5E0" />
<rect x="1265" y="122" width="1" height="1" fill="#5AA5E0" />
<rect x="1263" y="124" width="1" height="1" fill="#5AA5E0" />
<rect x="1267" y="120" width="1" height="1" fill="#5AA5E0" />
<rect x="1269" y="122" width="1" height="1" fill="#5AA5E0" />
<rect x="1267" y="124" width="1" height="1" fill="#5AA5E0" />
<rect x="1271" y="120" width="1" height="1" fill="#5AA5E0" />
<rect x="1273" y="122" width="1" height="1" fill="#5AA5E0" />
<rect x="1271" y="124" width="1" height="1" fill="#5AA5E0" />
<path d="M1280.5 120 h7.5 l-3.75 4z" fill="#FFFFFF" />
<path d="M1298 117.5 h6 M1299 117.5 v6 M1303 117.5 v6 M1296.5 123.5 h9 M1300.75 123.5 v5" fill="none" stroke="#FFFFFF" stroke-width="1.2" />
<path d="M1313 118 L1321.5 126.5 M1321.5 118 L1313 126.5" fill="none" stroke="#FFFFFF" stroke-width="1.5" />
<rect x="1023" y="133" width="288" height="27" fill="#2D2D30" />
<g fill="none" stroke="#E8E8E8" stroke-width="1.5"><circle cx="1041" cy="146" r="2.1"/><path d="M1039.8 138.8h2.4l.5 2 1.6.7 1.8-1.1 1.7 1.7-1.1 1.8.7 1.6 2 .5v2.4l-2 .5-.7 1.6 1.1 1.8-1.7 1.7-1.8-1.1-1.6.7-.5 2h-2.4l-.5-2-1.6-.7-1.8 1.1-1.7-1.7 1.1-1.8-.7-1.6-2-.5v-2.4l2-.5.7-1.6-1.1-1.8 1.7-1.7 1.8 1.1 1.6-.7z"/></g>
<line x1="1059.5" y1="135" x2="1059.5" y2="157" stroke="#3F3F46" stroke-width="1" />
<path d="M1079.5 138.5 H1067.5 V153.5 H1079.5 V150.8 M1079.5 138.5 V141.2" fill="none" stroke="#E8E8E8" stroke-width="1.3" />
<path d="M1078.5 141 H1070.3 V151 H1078.5" fill="none" stroke="#E8E8E8" stroke-width="1.3" />
<path d="M1071.5 144.2 h4.5 v-3.2 l5 4.9 l-5 4.9 v-3.2 h-4.5z" fill="#1E6CC8" stroke="#E8E8E8" stroke-width="0.9" />
<line x1="1093.5" y1="135" x2="1093.5" y2="157" stroke="#3F3F46" stroke-width="1" />
<g fill="none" stroke="#E8E8E8"><circle cx="1106.4" cy="143.6" r="4.6" stroke-width="1.4"/><path d="M1109.8 147 l5 5" stroke-width="2.2"/><circle cx="1132.6" cy="144" r="4.6" stroke-width="1.4"/><path d="M1136 147.4 l5 5" stroke-width="2.2"/></g>
<path d="M1103.8 143.6 h5.2 M1106.4 141 v5.2" fill="none" stroke="#1E6CC8" stroke-width="1.5" />
<path d="M1130 144 h5.2" fill="none" stroke="#1E6CC8" stroke-width="1.5" />
<path d="M1151.8 141 q0 -2.7 3 -2.7 q3 0 3 2.5 q0 1.7 -2.8 2.7 v1.8" fill="none" stroke="#E8E8E8" stroke-width="1.2" />
<path d="M1153 153.8 V146.5 H1156.6 V153.8 M1156.6 153.8 V142.8 H1160.8 V153.8 M1160.8 153.8 V146.8 H1165.3 V153.8 Z" fill="none" stroke="#E8E8E8" stroke-width="1.1" />
<path d="M1152.5 153.8 H1166" fill="none" stroke="#E8E8E8" stroke-width="1.2" />
<rect x="1023" y="160" width="288" height="21" fill="#252526" />
<text x="1033.5" y="174.6" font-size="12" fill="#F1F1F1" font-weight="bold" textLength="164.5" lengthAdjust="spacingAndGlyphs" >Diagnostics session: 0 seconds</text>
<line x1="1023" y1="181.5" x2="1311" y2="181.5" stroke="#555555" stroke-width="1" />
<rect x="1023" y="182" width="288" height="22" fill="#252526" />
<rect x="1055" y="182" width="5" height="22" fill="#F1F1F1" />
<rect x="1274" y="182" width="5" height="22" fill="#F1F1F1" />
<line x1="1086.0" y1="200" x2="1086.0" y2="204" stroke="#555555" stroke-width="1" />
<line x1="1110.5" y1="200" x2="1110.5" y2="204" stroke="#555555" stroke-width="1" />
<line x1="1135.1" y1="200" x2="1135.1" y2="204" stroke="#555555" stroke-width="1" />
<line x1="1159.8" y1="200" x2="1159.8" y2="204" stroke="#555555" stroke-width="1" />
<line x1="1209.9" y1="200" x2="1209.9" y2="204" stroke="#555555" stroke-width="1" />
<line x1="1234.5" y1="200" x2="1234.5" y2="204" stroke="#555555" stroke-width="1" />
<line x1="1259.1" y1="200" x2="1259.1" y2="204" stroke="#555555" stroke-width="1" />
<line x1="1185" y1="182" x2="1185" y2="204" stroke="#555555" stroke-width="1" />
<text x="1187" y="194.7" font-size="12" fill="#F1F1F1" stroke="#F1F1F1" stroke-width="0.22" textLength="17.4" lengthAdjust="spacingAndGlyphs" >10s</text>
<line x1="1023" y1="204.5" x2="1311" y2="204.5" stroke="#555555" stroke-width="1" />
<rect x="1023" y="205" width="288" height="170" fill="#252526" />
<path d="M1028.2 220.0 L1036.9 211.0 V220.0z" fill="#101010" />
<path d="M1029.7 219.29999999999998 L1036.3 212.39999999999998 V219.29999999999998z" fill="#B8B8B8" />
<text x="1040" y="220" font-size="12" fill="#F1F1F1" font-weight="bold" textLength="34.6" lengthAdjust="spacingAndGlyphs" >Events</text>
<rect x="1059.5" y="225.5" width="215" height="22" fill="none" stroke="#555555" stroke-width="1" />
<line x1="1184.5" y1="226" x2="1184.5" y2="247" stroke="#3A3A3A" stroke-width="1" />
<line x1="1061.5" y1="228" x2="1061.5" y2="244" stroke="#777777" stroke-width="1" />
<rect x="1041" y="230.5" width="10" height="10" fill="none" stroke="#F1F1F1" stroke-width="1.2" />
<line x1="1046" y1="230.5" x2="1046" y2="240.5" stroke="#F1F1F1" stroke-width="1.2" />
<path d="M1028.2 262.8 L1036.9 253.8 V262.8z" fill="#101010" />
<path d="M1029.7 262.1 L1036.3 255.2 V262.1z" fill="#B8B8B8" />
<text x="1040" y="262.8" font-size="12" fill="#F1F1F1" font-weight="bold" textLength="90.1" lengthAdjust="spacingAndGlyphs" >Process Memory</text>
<path d="M1215 252 H1222.6 L1221.2 260.5 Q1218.8 265.5 1216.4 260.5 Z" fill="#F0C14B" />
<path d="M1237 252.2 h12 l-6 10.3z" fill="#3A9BEA" />
<circle cx="1267" cy="258.2" r="6.2" fill="#74A9C9"/>
<rect x="1059.5" y="268.5" width="215" height="69" fill="none" stroke="#555555" stroke-width="1" />
<line x1="1184.5" y1="269" x2="1184.5" y2="337" stroke="#3A3A3A" stroke-width="1" />
<text x="1035.2" y="280.9" font-size="12" fill="#F1F1F1" stroke="#F1F1F1" stroke-width="0.22" textLength="18.8" lengthAdjust="spacingAndGlyphs" >100</text>
<text x="1280.8" y="280.9" font-size="12" fill="#F1F1F1" stroke="#F1F1F1" stroke-width="0.22" textLength="18.7" lengthAdjust="spacingAndGlyphs" >100</text>
<text x="1048" y="334.8" font-size="12" fill="#F1F1F1" stroke="#F1F1F1" stroke-width="0.22" textLength="6.3" lengthAdjust="spacingAndGlyphs" >0</text>
<text x="1280.8" y="334.8" font-size="12" fill="#F1F1F1" stroke="#F1F1F1" stroke-width="0.22" textLength="6.3" lengthAdjust="spacingAndGlyphs" >0</text>
<path d="M1028.2 353.6 L1036.9 344.6 V353.6z" fill="#101010" />
<path d="M1029.7 352.90000000000003 L1036.3 346.0 V352.90000000000003z" fill="#B8B8B8" />
<text x="1040" y="353" font-size="12" fill="#F1F1F1" font-weight="bold" textLength="135.4" lengthAdjust="spacingAndGlyphs" >CPU (% of all processors)</text>
<rect x="1059.5" y="358.5" width="215" height="30" fill="none" stroke="#555555" stroke-width="1" />
<line x1="1184.5" y1="359" x2="1184.5" y2="375" stroke="#3A3A3A" stroke-width="1" />
<text x="1035.2" y="370.6" font-size="12" fill="#F1F1F1" stroke="#F1F1F1" stroke-width="0.22" textLength="18.8" lengthAdjust="spacingAndGlyphs" >100</text>
<text x="1280.8" y="370.6" font-size="12" fill="#F1F1F1" stroke="#F1F1F1" stroke-width="0.22" textLength="18.7" lengthAdjust="spacingAndGlyphs" >100</text>
<rect x="1311" y="133" width="17" height="242" fill="#3E3E42" />
<path d="M1314.3 158.5 l5.3 -5.5 l5.3 5.5" fill="none" stroke="#999999" stroke-width="2.8" />
<rect x="1312" y="166.5" width="15" height="134.5" fill="#686868" />
<path d="M1314.3 349.5 l5.3 5.5 l5.3 -5.5" fill="none" stroke="#999999" stroke-width="2.8" />
<rect x="1023" y="378" width="305" height="24" fill="#252526" />
<rect x="1027" y="382" width="63" height="20" fill="#3F3F46" />
<text x="1032.9" y="395.8" font-size="12" fill="#F1F1F1" stroke="#F1F1F1" stroke-width="0.22" textLength="51.1" lengthAdjust="spacingAndGlyphs" >Summary</text>
<text x="1096" y="395.8" font-size="12" fill="#F1F1F1" stroke="#F1F1F1" stroke-width="0.22" textLength="34" lengthAdjust="spacingAndGlyphs" >Events</text>
<text x="1142.6" y="395.8" font-size="12" fill="#F1F1F1" stroke="#F1F1F1" stroke-width="0.22" textLength="79.6" lengthAdjust="spacingAndGlyphs" >Memory Usage</text>
<text x="1234.4" y="395.8" font-size="12" fill="#F1F1F1" stroke="#F1F1F1" stroke-width="0.22" textLength="57.6" lengthAdjust="spacingAndGlyphs" >CPU Usage</text>
<rect x="1023" y="405" width="288" height="133" fill="#252526" />
<line x1="1023" y1="427.5" x2="1311" y2="427.5" stroke="#3F3F46" stroke-width="1" />
<line x1="1023" y1="456.5" x2="1311" y2="456.5" stroke="#3F3F46" stroke-width="1" />
<line x1="1023" y1="479.5" x2="1311" y2="479.5" stroke="#3F3F46" stroke-width="1" />
<line x1="1023" y1="509.0" x2="1311" y2="509.0" stroke="#3F3F46" stroke-width="1" />
<line x1="1023" y1="531.5" x2="1311" y2="531.5" stroke="#3F3F46" stroke-width="1" />
<text x="1032.4" y="421" font-size="12" fill="#F1F1F1" font-weight="bold" textLength="35" lengthAdjust="spacingAndGlyphs" >Events</text>
<text x="1059.6" y="447.2" font-size="12" fill="#F1F1F1" stroke="#F1F1F1" stroke-width="0.22" textLength="106.7" lengthAdjust="spacingAndGlyphs" >Show Events (1 of 1)</text>
<g fill="#B8B8B8" stroke="#E0E0E0" stroke-width="0.8"><path d="M1038.5 443 l3 -2.8 l3 2.8 l-3 2.8z M1041.7 443 l3 -2.8 l3 2.8 l-3 2.8z M1044.9 443 l3 -2.8 l3 2.8 l-3 2.8z"/></g>
<text x="1032.4" y="473" font-size="12" fill="#F1F1F1" font-weight="bold" textLength="81.7" lengthAdjust="spacingAndGlyphs" >Memory Usage</text>
<text x="1059.6" y="499" font-size="12" fill="#F1F1F1" stroke="#F1F1F1" stroke-width="0.22" textLength="77.2" lengthAdjust="spacingAndGlyphs" >Take Snapshot</text>
<g fill="none" stroke="#C8C8C8" stroke-width="1"><rect x="1038.5" y="491.5" width="12" height="8"/><circle cx="1044.5" cy="495.5" r="2"/><path d="M1040.5 491.5 v-2 h3 v2"/></g>
<text x="1032.4" y="525" font-size="12" fill="#F1F1F1" font-weight="bold" textLength="59.4" lengthAdjust="spacingAndGlyphs" >CPU Usage</text>
<rect x="1311" y="405" width="17" height="133" fill="#3E3E42" />
<path d="M1314.3 430.5 l5.3 -5.5 l5.3 5.5" fill="none" stroke="#999999" stroke-width="2.8" />
<rect x="1312" y="438" width="15" height="58" fill="#686868" />
<path d="M1314.3 514 l5.3 5.5 l5.3 -5.5" fill="none" stroke="#999999" stroke-width="2.8" />
<text transform="translate(1338.5 111) rotate(90)" font-size="12" fill="#F1F1F1" textLength="88.7" lengthAdjust="spacingAndGlyphs">Solution Explorer</text>
<text transform="translate(1338.5 212.5) rotate(90)" font-size="12" fill="#F1F1F1" textLength="74.5" lengthAdjust="spacingAndGlyphs">Team Explorer</text>
<rect x="1354" y="111" width="6" height="88.5" fill="#3E3E42" />
<rect x="1354" y="212.5" width="6" height="74.5" fill="#3E3E42" />
<rect x="1335" y="118" width="1" height="1.5" fill="#6A3030" />
<rect x="1335" y="127" width="1" height="1.5" fill="#6A3030" />
<rect x="1335" y="136" width="1" height="1.5" fill="#6A3030" />
<rect x="1335" y="145" width="1" height="1.5" fill="#6A3030" />
<rect x="1335" y="154" width="1" height="1.5" fill="#6A3030" />
<rect x="1335" y="163" width="1" height="1.5" fill="#6A3030" />
<rect x="1335" y="172" width="1" height="1.5" fill="#6A3030" />
<rect x="1335" y="181" width="1" height="1.5" fill="#6A3030" />
<rect x="1335" y="190" width="1" height="1.5" fill="#6A3030" />
<rect x="1335" y="218" width="1" height="1.5" fill="#6A3030" />
<rect x="1335" y="227" width="1" height="1.5" fill="#6A3030" />
<rect x="1335" y="236" width="1" height="1.5" fill="#6A3030" />
<rect x="1335" y="245" width="1" height="1.5" fill="#6A3030" />
<rect x="1335" y="254" width="1" height="1.5" fill="#6A3030" />
<rect x="1335" y="263" width="1" height="1.5" fill="#6A3030" />
<rect x="1335" y="272" width="1" height="1.5" fill="#6A3030" />
<rect x="1335" y="281" width="1" height="1.5" fill="#6A3030" />
<rect x="6" y="540" width="1323" height="7" fill="#3F3F46" />
<rect x="0" y="540" width="6" height="228" fill="#2D2D30" />
<rect x="7" y="547" width="654" height="21" fill="#2D2D30" />
<text x="11.5" y="561.5" font-size="12" fill="#F1F1F1" stroke="#F1F1F1" stroke-width="0.22" textLength="41.5" lengthAdjust="spacingAndGlyphs" >Watch 1</text>
<rect x="61" y="555" width="1" height="1" fill="#46464A" />
<rect x="63" y="557" width="1" height="1" fill="#46464A" />
<rect x="61" y="559" width="1" height="1" fill="#46464A" />
<rect x="65" y="555" width="1" height="1" fill="#46464A" />
<rect x="67" y="557" width="1" height="1" fill="#46464A" />
<rect x="65" y="559" width="1" height="1" fill="#46464A" />
<rect x="69" y="555" width="1" height="1" fill="#46464A" />
<rect x="71" y="557" width="1" height="1" fill="#46464A" />
<rect x="69" y="559" width="1" height="1" fill="#46464A" />
<rect x="73" y="555" width="1" height="1" fill="#46464A" />
<rect x="75" y="557" width="1" height="1" fill="#46464A" />
<rect x="73" y="559" width="1" height="1" fill="#46464A" />
<rect x="77" y="555" width="1" height="1" fill="#46464A" />
<rect x="79" y="557" width="1" height="1" fill="#46464A" />
<rect x="77" y="559" width="1" height="1" fill="#46464A" />
<rect x="81" y="555" width="1" height="1" fill="#46464A" />
<rect x="83" y="557" width="1" height="1" fill="#46464A" />
<rect x="81" y="559" width="1" height="1" fill="#46464A" />
<rect x="85" y="555" width="1" height="1" fill="#46464A" />
<rect x="87" y="557" width="1" height="1" fill="#46464A" />
<rect x="85" y="559" width="1" height="1" fill="#46464A" />
<rect x="89" y="555" width="1" height="1" fill="#46464A" />
<rect x="91" y="557" width="1" height="1" fill="#46464A" />
<rect x="89" y="559" width="1" height="1" fill="#46464A" />
<rect x="93" y="555" width="1" height="1" fill="#46464A" />
<rect x="95" y="557" width="1" height="1" fill="#46464A" />
<rect x="93" y="559" width="1" height="1" fill="#46464A" />
<rect x="97" y="555" width="1" height="1" fill="#46464A" />
<rect x="99" y="557" width="1" height="1" fill="#46464A" />
<rect x="97" y="559" width="1" height="1" fill="#46464A" />
<rect x="101" y="555" width="1" height="1" fill="#46464A" />
<rect x="103" y="557" width="1" height="1" fill="#46464A" />
<rect x="101" y="559" width="1" height="1" fill="#46464A" />
<rect x="105" y="555" width="1" height="1" fill="#46464A" />
<rect x="107" y="557" width="1" height="1" fill="#46464A" />
<rect x="105" y="559" width="1" height="1" fill="#46464A" />
<rect x="109" y="555" width="1" height="1" fill="#46464A" />
<rect x="111" y="557" width="1" height="1" fill="#46464A" />
<rect x="109" y="559" width="1" height="1" fill="#46464A" />
<rect x="113" y="555" width="1" height="1" fill="#46464A" />
<rect x="115" y="557" width="1" height="1" fill="#46464A" />
<rect x="113" y="559" width="1" height="1" fill="#46464A" />
<rect x="117" y="555" width="1" height="1" fill="#46464A" />
<rect x="119" y="557" width="1" height="1" fill="#46464A" />
<rect x="117" y="559" width="1" height="1" fill="#46464A" />
<rect x="121" y="555" width="1" height="1" fill="#46464A" />
<rect x="123" y="557" width="1" height="1" fill="#46464A" />
<rect x="121" y="559" width="1" height="1" fill="#46464A" />
<rect x="125" y="555" width="1" height="1" fill="#46464A" />
<rect x="127" y="557" width="1" height="1" fill="#46464A" />
<rect x="125" y="559" width="1" height="1" fill="#46464A" />
<rect x="129" y="555" width="1" height="1" fill="#46464A" />
<rect x="131" y="557" width="1" height="1" fill="#46464A" />
<rect x="129" y="559" width="1" height="1" fill="#46464A" />
<rect x="133" y="555" width="1" height="1" fill="#46464A" />
<rect x="135" y="557" width="1" height="1" fill="#46464A" />
<rect x="133" y="559" width="1" height="1" fill="#46464A" />
<rect x="137" y="555" width="1" height="1" fill="#46464A" />
<rect x="139" y="557" width="1" height="1" fill="#46464A" />
<rect x="137" y="559" width="1" height="1" fill="#46464A" />
<rect x="141" y="555" width="1" height="1" fill="#46464A" />
<rect x="143" y="557" width="1" height="1" fill="#46464A" />
<rect x="141" y="559" width="1" height="1" fill="#46464A" />
<rect x="145" y="555" width="1" height="1" fill="#46464A" />
<rect x="147" y="557" width="1" height="1" fill="#46464A" />
<rect x="145" y="559" width="1" height="1" fill="#46464A" />
<rect x="149" y="555" width="1" height="1" fill="#46464A" />
<rect x="151" y="557" width="1" height="1" fill="#46464A" />
<rect x="149" y="559" width="1" height="1" fill="#46464A" />
<rect x="153" y="555" width="1" height="1" fill="#46464A" />
<rect x="155" y="557" width="1" height="1" fill="#46464A" />
<rect x="153" y="559" width="1" height="1" fill="#46464A" />
<rect x="157" y="555" width="1" height="1" fill="#46464A" />
<rect x="159" y="557" width="1" height="1" fill="#46464A" />
<rect x="157" y="559" width="1" height="1" fill="#46464A" />
<rect x="161" y="555" width="1" height="1" fill="#46464A" />
<rect x="163" y="557" width="1" height="1" fill="#46464A" />
<rect x="161" y="559" width="1" height="1" fill="#46464A" />
<rect x="165" y="555" width="1" height="1" fill="#46464A" />
<rect x="167" y="557" width="1" height="1" fill="#46464A" />
<rect x="165" y="559" width="1" height="1" fill="#46464A" />
<rect x="169" y="555" width="1" height="1" fill="#46464A" />
<rect x="171" y="557" width="1" height="1" fill="#46464A" />
<rect x="169" y="559" width="1" height="1" fill="#46464A" />
<rect x="173" y="555" width="1" height="1" fill="#46464A" />
<rect x="175" y="557" width="1" height="1" fill="#46464A" />
<rect x="173" y="559" width="1" height="1" fill="#46464A" />
<rect x="177" y="555" width="1" height="1" fill="#46464A" />
<rect x="179" y="557" width="1" height="1" fill="#46464A" />
<rect x="177" y="559" width="1" height="1" fill="#46464A" />
<rect x="181" y="555" width="1" height="1" fill="#46464A" />
<rect x="183" y="557" width="1" height="1" fill="#46464A" />
<rect x="181" y="559" width="1" height="1" fill="#46464A" />
<rect x="185" y="555" width="1" height="1" fill="#46464A" />
<rect x="187" y="557" width="1" height="1" fill="#46464A" />
<rect x="185" y="559" width="1" height="1" fill="#46464A" />
<rect x="189" y="555" width="1" height="1" fill="#46464A" />
<rect x="191" y="557" width="1" height="1" fill="#46464A" />
<rect x="189" y="559" width="1" height="1" fill="#46464A" />
<rect x="193" y="555" width="1" height="1" fill="#46464A" />
<rect x="195" y="557" width="1" height="1" fill="#46464A" />
<rect x="193" y="559" width="1" height="1" fill="#46464A" />
<rect x="197" y="555" width="1" height="1" fill="#46464A" />
<rect x="199" y="557" width="1" height="1" fill="#46464A" />
<rect x="197" y="559" width="1" height="1" fill="#46464A" />
<rect x="201" y="555" width="1" height="1" fill="#46464A" />
<rect x="203" y="557" width="1" height="1" fill="#46464A" />
<rect x="201" y="559" width="1" height="1" fill="#46464A" />
<rect x="205" y="555" width="1" height="1" fill="#46464A" />
<rect x="207" y="557" width="1" height="1" fill="#46464A" />
<rect x="205" y="559" width="1" height="1" fill="#46464A" />
<rect x="209" y="555" width="1" height="1" fill="#46464A" />
<rect x="211" y="557" width="1" height="1" fill="#46464A" />
<rect x="209" y="559" width="1" height="1" fill="#46464A" />
<rect x="213" y="555" width="1" height="1" fill="#46464A" />
<rect x="215" y="557" width="1" height="1" fill="#46464A" />
<rect x="213" y="559" width="1" height="1" fill="#46464A" />
<rect x="217" y="555" width="1" height="1" fill="#46464A" />
<rect x="219" y="557" width="1" height="1" fill="#46464A" />
<rect x="217" y="559" width="1" height="1" fill="#46464A" />
<rect x="221" y="555" width="1" height="1" fill="#46464A" />
<rect x="223" y="557" width="1" height="1" fill="#46464A" />
<rect x="221" y="559" width="1" height="1" fill="#46464A" />
<rect x="225" y="555" width="1" height="1" fill="#46464A" />
<rect x="227" y="557" width="1" height="1" fill="#46464A" />
<rect x="225" y="559" width="1" height="1" fill="#46464A" />
<rect x="229" y="555" width="1" height="1" fill="#46464A" />
<rect x="231" y="557" width="1" height="1" fill="#46464A" />
<rect x="229" y="559" width="1" height="1" fill="#46464A" />
<rect x="233" y="555" width="1" height="1" fill="#46464A" />
<rect x="235" y="557" width="1" height="1" fill="#46464A" />
<rect x="233" y="559" width="1" height="1" fill="#46464A" />
<rect x="237" y="555" width="1" height="1" fill="#46464A" />
<rect x="239" y="557" width="1" height="1" fill="#46464A" />
<rect x="237" y="559" width="1" height="1" fill="#46464A" />
<rect x="241" y="555" width="1" height="1" fill="#46464A" />
<rect x="243" y="557" width="1" height="1" fill="#46464A" />
<rect x="241" y="559" width="1" height="1" fill="#46464A" />
<rect x="245" y="555" width="1" height="1" fill="#46464A" />
<rect x="247" y="557" width="1" height="1" fill="#46464A" />
<rect x="245" y="559" width="1" height="1" fill="#46464A" />
<rect x="249" y="555" width="1" height="1" fill="#46464A" />
<rect x="251" y="557" width="1" height="1" fill="#46464A" />
<rect x="249" y="559" width="1" height="1" fill="#46464A" />
<rect x="253" y="555" width="1" height="1" fill="#46464A" />
<rect x="255" y="557" width="1" height="1" fill="#46464A" />
<rect x="253" y="559" width="1" height="1" fill="#46464A" />
<rect x="257" y="555" width="1" height="1" fill="#46464A" />
<rect x="259" y="557" width="1" height="1" fill="#46464A" />
<rect x="257" y="559" width="1" height="1" fill="#46464A" />
<rect x="261" y="555" width="1" height="1" fill="#46464A" />
<rect x="263" y="557" width="1" height="1" fill="#46464A" />
<rect x="261" y="559" width="1" height="1" fill="#46464A" />
<rect x="265" y="555" width="1" height="1" fill="#46464A" />
<rect x="267" y="557" width="1" height="1" fill="#46464A" />
<rect x="265" y="559" width="1" height="1" fill="#46464A" />
<rect x="269" y="555" width="1" height="1" fill="#46464A" />
<rect x="271" y="557" width="1" height="1" fill="#46464A" />
<rect x="269" y="559" width="1" height="1" fill="#46464A" />
<rect x="273" y="555" width="1" height="1" fill="#46464A" />
<rect x="275" y="557" width="1" height="1" fill="#46464A" />
<rect x="273" y="559" width="1" height="1" fill="#46464A" />
<rect x="277" y="555" width="1" height="1" fill="#46464A" />
<rect x="279" y="557" width="1" height="1" fill="#46464A" />
<rect x="277" y="559" width="1" height="1" fill="#46464A" />
<rect x="281" y="555" width="1" height="1" fill="#46464A" />
<rect x="283" y="557" width="1" height="1" fill="#46464A" />
<rect x="281" y="559" width="1" height="1" fill="#46464A" />
<rect x="285" y="555" width="1" height="1" fill="#46464A" />
<rect x="287" y="557" width="1" height="1" fill="#46464A" />
<rect x="285" y="559" width="1" height="1" fill="#46464A" />
<rect x="289" y="555" width="1" height="1" fill="#46464A" />
<rect x="291" y="557" width="1" height="1" fill="#46464A" />
<rect x="289" y="559" width="1" height="1" fill="#46464A" />
<rect x="293" y="555" width="1" height="1" fill="#46464A" />
<rect x="295" y="557" width="1" height="1" fill="#46464A" />
<rect x="293" y="559" width="1" height="1" fill="#46464A" />
<rect x="297" y="555" width="1" height="1" fill="#46464A" />
<rect x="299" y="557" width="1" height="1" fill="#46464A" />
<rect x="297" y="559" width="1" height="1" fill="#46464A" />
<rect x="301" y="555" width="1" height="1" fill="#46464A" />
<rect x="303" y="557" width="1" height="1" fill="#46464A" />
<rect x="301" y="559" width="1" height="1" fill="#46464A" />
<rect x="305" y="555" width="1" height="1" fill="#46464A" />
<rect x="307" y="557" width="1" height="1" fill="#46464A" />
<rect x="305" y="559" width="1" height="1" fill="#46464A" />
<rect x="309" y="555" width="1" height="1" fill="#46464A" />
<rect x="311" y="557" width="1" height="1" fill="#46464A" />
<rect x="309" y="559" width="1" height="1" fill="#46464A" />
<rect x="313" y="555" width="1" height="1" fill="#46464A" />
<rect x="315" y="557" width="1" height="1" fill="#46464A" />
<rect x="313" y="559" width="1" height="1" fill="#46464A" />
<rect x="317" y="555" width="1" height="1" fill="#46464A" />
<rect x="319" y="557" width="1" height="1" fill="#46464A" />
<rect x="317" y="559" width="1" height="1" fill="#46464A" />
<rect x="321" y="555" width="1" height="1" fill="#46464A" />
<rect x="323" y="557" width="1" height="1" fill="#46464A" />
<rect x="321" y="559" width="1" height="1" fill="#46464A" />
<rect x="325" y="555" width="1" height="1" fill="#46464A" />
<rect x="327" y="557" width="1" height="1" fill="#46464A" />
<rect x="325" y="559" width="1" height="1" fill="#46464A" />
<rect x="329" y="555" width="1" height="1" fill="#46464A" />
<rect x="331" y="557" width="1" height="1" fill="#46464A" />
<rect x="329" y="559" width="1" height="1" fill="#46464A" />
<rect x="333" y="555" width="1" height="1" fill="#46464A" />
<rect x="335" y="557" width="1" height="1" fill="#46464A" />
<rect x="333" y="559" width="1" height="1" fill="#46464A" />
<rect x="337" y="555" width="1" height="1" fill="#46464A" />
<rect x="339" y="557" width="1" height="1" fill="#46464A" />
<rect x="337" y="559" width="1" height="1" fill="#46464A" />
<rect x="341" y="555" width="1" height="1" fill="#46464A" />
<rect x="343" y="557" width="1" height="1" fill="#46464A" />
<rect x="341" y="559" width="1" height="1" fill="#46464A" />
<rect x="345" y="555" width="1" height="1" fill="#46464A" />
<rect x="347" y="557" width="1" height="1" fill="#46464A" />
<rect x="345" y="559" width="1" height="1" fill="#46464A" />
<rect x="349" y="555" width="1" height="1" fill="#46464A" />
<rect x="351" y="557" width="1" height="1" fill="#46464A" />
<rect x="349" y="559" width="1" height="1" fill="#46464A" />
<rect x="353" y="555" width="1" height="1" fill="#46464A" />
<rect x="355" y="557" width="1" height="1" fill="#46464A" />
<rect x="353" y="559" width="1" height="1" fill="#46464A" />
<rect x="357" y="555" width="1" height="1" fill="#46464A" />
<rect x="359" y="557" width="1" height="1" fill="#46464A" />
<rect x="357" y="559" width="1" height="1" fill="#46464A" />
<rect x="361" y="555" width="1" height="1" fill="#46464A" />
<rect x="363" y="557" width="1" height="1" fill="#46464A" />
<rect x="361" y="559" width="1" height="1" fill="#46464A" />
<rect x="365" y="555" width="1" height="1" fill="#46464A" />
<rect x="367" y="557" width="1" height="1" fill="#46464A" />
<rect x="365" y="559" width="1" height="1" fill="#46464A" />
<rect x="369" y="555" width="1" height="1" fill="#46464A" />
<rect x="371" y="557" width="1" height="1" fill="#46464A" />
<rect x="369" y="559" width="1" height="1" fill="#46464A" />
<rect x="373" y="555" width="1" height="1" fill="#46464A" />
<rect x="375" y="557" width="1" height="1" fill="#46464A" />
<rect x="373" y="559" width="1" height="1" fill="#46464A" />
<rect x="377" y="555" width="1" height="1" fill="#46464A" />
<rect x="379" y="557" width="1" height="1" fill="#46464A" />
<rect x="377" y="559" width="1" height="1" fill="#46464A" />
<rect x="381" y="555" width="1" height="1" fill="#46464A" />
<rect x="383" y="557" width="1" height="1" fill="#46464A" />
<rect x="381" y="559" width="1" height="1" fill="#46464A" />
<rect x="385" y="555" width="1" height="1" fill="#46464A" />
<rect x="387" y="557" width="1" height="1" fill="#46464A" />
<rect x="385" y="559" width="1" height="1" fill="#46464A" />
<rect x="389" y="555" width="1" height="1" fill="#46464A" />
<rect x="391" y="557" width="1" height="1" fill="#46464A" />
<rect x="389" y="559" width="1" height="1" fill="#46464A" />
<rect x="393" y="555" width="1" height="1" fill="#46464A" />
<rect x="395" y="557" width="1" height="1" fill="#46464A" />
<rect x="393" y="559" width="1" height="1" fill="#46464A" />
<rect x="397" y="555" width="1" height="1" fill="#46464A" />
<rect x="399" y="557" width="1" height="1" fill="#46464A" />
<rect x="397" y="559" width="1" height="1" fill="#46464A" />
<rect x="401" y="555" width="1" height="1" fill="#46464A" />
<rect x="403" y="557" width="1" height="1" fill="#46464A" />
<rect x="401" y="559" width="1" height="1" fill="#46464A" />
<rect x="405" y="555" width="1" height="1" fill="#46464A" />
<rect x="407" y="557" width="1" height="1" fill="#46464A" />
<rect x="405" y="559" width="1" height="1" fill="#46464A" />
<rect x="409" y="555" width="1" height="1" fill="#46464A" />
<rect x="411" y="557" width="1" height="1" fill="#46464A" />
<rect x="409" y="559" width="1" height="1" fill="#46464A" />
<rect x="413" y="555" width="1" height="1" fill="#46464A" />
<rect x="415" y="557" width="1" height="1" fill="#46464A" />
<rect x="413" y="559" width="1" height="1" fill="#46464A" />
<rect x="417" y="555" width="1" height="1" fill="#46464A" />
<rect x="419" y="557" width="1" height="1" fill="#46464A" />
<rect x="417" y="559" width="1" height="1" fill="#46464A" />
<rect x="421" y="555" width="1" height="1" fill="#46464A" />
<rect x="423" y="557" width="1" height="1" fill="#46464A" />
<rect x="421" y="559" width="1" height="1" fill="#46464A" />
<rect x="425" y="555" width="1" height="1" fill="#46464A" />
<rect x="427" y="557" width="1" height="1" fill="#46464A" />
<rect x="425" y="559" width="1" height="1" fill="#46464A" />
<rect x="429" y="555" width="1" height="1" fill="#46464A" />
<rect x="431" y="557" width="1" height="1" fill="#46464A" />
<rect x="429" y="559" width="1" height="1" fill="#46464A" />
<rect x="433" y="555" width="1" height="1" fill="#46464A" />
<rect x="435" y="557" width="1" height="1" fill="#46464A" />
<rect x="433" y="559" width="1" height="1" fill="#46464A" />
<rect x="437" y="555" width="1" height="1" fill="#46464A" />
<rect x="439" y="557" width="1" height="1" fill="#46464A" />
<rect x="437" y="559" width="1" height="1" fill="#46464A" />
<rect x="441" y="555" width="1" height="1" fill="#46464A" />
<rect x="443" y="557" width="1" height="1" fill="#46464A" />
<rect x="441" y="559" width="1" height="1" fill="#46464A" />
<rect x="445" y="555" width="1" height="1" fill="#46464A" />
<rect x="447" y="557" width="1" height="1" fill="#46464A" />
<rect x="445" y="559" width="1" height="1" fill="#46464A" />
<rect x="449" y="555" width="1" height="1" fill="#46464A" />
<rect x="451" y="557" width="1" height="1" fill="#46464A" />
<rect x="449" y="559" width="1" height="1" fill="#46464A" />
<rect x="453" y="555" width="1" height="1" fill="#46464A" />
<rect x="455" y="557" width="1" height="1" fill="#46464A" />
<rect x="453" y="559" width="1" height="1" fill="#46464A" />
<rect x="457" y="555" width="1" height="1" fill="#46464A" />
<rect x="459" y="557" width="1" height="1" fill="#46464A" />
<rect x="457" y="559" width="1" height="1" fill="#46464A" />
<rect x="461" y="555" width="1" height="1" fill="#46464A" />
<rect x="463" y="557" width="1" height="1" fill="#46464A" />
<rect x="461" y="559" width="1" height="1" fill="#46464A" />
<rect x="465" y="555" width="1" height="1" fill="#46464A" />
<rect x="467" y="557" width="1" height="1" fill="#46464A" />
<rect x="465" y="559" width="1" height="1" fill="#46464A" />
<rect x="469" y="555" width="1" height="1" fill="#46464A" />
<rect x="471" y="557" width="1" height="1" fill="#46464A" />
<rect x="469" y="559" width="1" height="1" fill="#46464A" />
<rect x="473" y="555" width="1" height="1" fill="#46464A" />
<rect x="475" y="557" width="1" height="1" fill="#46464A" />
<rect x="473" y="559" width="1" height="1" fill="#46464A" />
<rect x="477" y="555" width="1" height="1" fill="#46464A" />
<rect x="479" y="557" width="1" height="1" fill="#46464A" />
<rect x="477" y="559" width="1" height="1" fill="#46464A" />
<rect x="481" y="555" width="1" height="1" fill="#46464A" />
<rect x="483" y="557" width="1" height="1" fill="#46464A" />
<rect x="481" y="559" width="1" height="1" fill="#46464A" />
<rect x="485" y="555" width="1" height="1" fill="#46464A" />
<rect x="487" y="557" width="1" height="1" fill="#46464A" />
<rect x="485" y="559" width="1" height="1" fill="#46464A" />
<rect x="489" y="555" width="1" height="1" fill="#46464A" />
<rect x="491" y="557" width="1" height="1" fill="#46464A" />
<rect x="489" y="559" width="1" height="1" fill="#46464A" />
<rect x="493" y="555" width="1" height="1" fill="#46464A" />
<rect x="495" y="557" width="1" height="1" fill="#46464A" />
<rect x="493" y="559" width="1" height="1" fill="#46464A" />
<rect x="497" y="555" width="1" height="1" fill="#46464A" />
<rect x="499" y="557" width="1" height="1" fill="#46464A" />
<rect x="497" y="559" width="1" height="1" fill="#46464A" />
<rect x="501" y="555" width="1" height="1" fill="#46464A" />
<rect x="503" y="557" width="1" height="1" fill="#46464A" />
<rect x="501" y="559" width="1" height="1" fill="#46464A" />
<rect x="505" y="555" width="1" height="1" fill="#46464A" />
<rect x="507" y="557" width="1" height="1" fill="#46464A" />
<rect x="505" y="559" width="1" height="1" fill="#46464A" />
<rect x="509" y="555" width="1" height="1" fill="#46464A" />
<rect x="511" y="557" width="1" height="1" fill="#46464A" />
<rect x="509" y="559" width="1" height="1" fill="#46464A" />
<rect x="513" y="555" width="1" height="1" fill="#46464A" />
<rect x="515" y="557" width="1" height="1" fill="#46464A" />
<rect x="513" y="559" width="1" height="1" fill="#46464A" />
<rect x="517" y="555" width="1" height="1" fill="#46464A" />
<rect x="519" y="557" width="1" height="1" fill="#46464A" />
<rect x="517" y="559" width="1" height="1" fill="#46464A" />
<rect x="521" y="555" width="1" height="1" fill="#46464A" />
<rect x="523" y="557" width="1" height="1" fill="#46464A" />
<rect x="521" y="559" width="1" height="1" fill="#46464A" />
<rect x="525" y="555" width="1" height="1" fill="#46464A" />
<rect x="527" y="557" width="1" height="1" fill="#46464A" />
<rect x="525" y="559" width="1" height="1" fill="#46464A" />
<rect x="529" y="555" width="1" height="1" fill="#46464A" />
<rect x="531" y="557" width="1" height="1" fill="#46464A" />
<rect x="529" y="559" width="1" height="1" fill="#46464A" />
<rect x="533" y="555" width="1" height="1" fill="#46464A" />
<rect x="535" y="557" width="1" height="1" fill="#46464A" />
<rect x="533" y="559" width="1" height="1" fill="#46464A" />
<rect x="537" y="555" width="1" height="1" fill="#46464A" />
<rect x="539" y="557" width="1" height="1" fill="#46464A" />
<rect x="537" y="559" width="1" height="1" fill="#46464A" />
<rect x="541" y="555" width="1" height="1" fill="#46464A" />
<rect x="543" y="557" width="1" height="1" fill="#46464A" />
<rect x="541" y="559" width="1" height="1" fill="#46464A" />
<rect x="545" y="555" width="1" height="1" fill="#46464A" />
<rect x="547" y="557" width="1" height="1" fill="#46464A" />
<rect x="545" y="559" width="1" height="1" fill="#46464A" />
<rect x="549" y="555" width="1" height="1" fill="#46464A" />
<rect x="551" y="557" width="1" height="1" fill="#46464A" />
<rect x="549" y="559" width="1" height="1" fill="#46464A" />
<rect x="553" y="555" width="1" height="1" fill="#46464A" />
<rect x="555" y="557" width="1" height="1" fill="#46464A" />
<rect x="553" y="559" width="1" height="1" fill="#46464A" />
<rect x="557" y="555" width="1" height="1" fill="#46464A" />
<rect x="559" y="557" width="1" height="1" fill="#46464A" />
<rect x="557" y="559" width="1" height="1" fill="#46464A" />
<rect x="561" y="555" width="1" height="1" fill="#46464A" />
<rect x="563" y="557" width="1" height="1" fill="#46464A" />
<rect x="561" y="559" width="1" height="1" fill="#46464A" />
<rect x="565" y="555" width="1" height="1" fill="#46464A" />
<rect x="567" y="557" width="1" height="1" fill="#46464A" />
<rect x="565" y="559" width="1" height="1" fill="#46464A" />
<rect x="569" y="555" width="1" height="1" fill="#46464A" />
<rect x="571" y="557" width="1" height="1" fill="#46464A" />
<rect x="569" y="559" width="1" height="1" fill="#46464A" />
<rect x="573" y="555" width="1" height="1" fill="#46464A" />
<rect x="575" y="557" width="1" height="1" fill="#46464A" />
<rect x="573" y="559" width="1" height="1" fill="#46464A" />
<rect x="577" y="555" width="1" height="1" fill="#46464A" />
<rect x="579" y="557" width="1" height="1" fill="#46464A" />
<rect x="577" y="559" width="1" height="1" fill="#46464A" />
<rect x="581" y="555" width="1" height="1" fill="#46464A" />
<rect x="583" y="557" width="1" height="1" fill="#46464A" />
<rect x="581" y="559" width="1" height="1" fill="#46464A" />
<rect x="585" y="555" width="1" height="1" fill="#46464A" />
<rect x="587" y="557" width="1" height="1" fill="#46464A" />
<rect x="585" y="559" width="1" height="1" fill="#46464A" />
<rect x="589" y="555" width="1" height="1" fill="#46464A" />
<rect x="591" y="557" width="1" height="1" fill="#46464A" />
<rect x="589" y="559" width="1" height="1" fill="#46464A" />
<rect x="593" y="555" width="1" height="1" fill="#46464A" />
<rect x="595" y="557" width="1" height="1" fill="#46464A" />
<rect x="593" y="559" width="1" height="1" fill="#46464A" />
<rect x="597" y="555" width="1" height="1" fill="#46464A" />
<rect x="599" y="557" width="1" height="1" fill="#46464A" />
<rect x="597" y="559" width="1" height="1" fill="#46464A" />
<rect x="601" y="555" width="1" height="1" fill="#46464A" />
<rect x="603" y="557" width="1" height="1" fill="#46464A" />
<rect x="601" y="559" width="1" height="1" fill="#46464A" />
<rect x="605" y="555" width="1" height="1" fill="#46464A" />
<rect x="607" y="557" width="1" height="1" fill="#46464A" />
<rect x="605" y="559" width="1" height="1" fill="#46464A" />
<rect x="609" y="555" width="1" height="1" fill="#46464A" />
<rect x="611" y="557" width="1" height="1" fill="#46464A" />
<rect x="609" y="559" width="1" height="1" fill="#46464A" />
<path d="M613 555 h7.5 l-3.75 4z" fill="#F1F1F1" />
<path d="M630 553.5 h5.5 M631 553.5 v5.5 M634.5 553.5 v5.5 M628.5 559 h8.5 M632.75 559 v5" fill="none" stroke="#F1F1F1" stroke-width="1.2" />
<path d="M645 553.5 L654 562 M654 553.5 L645 562" fill="none" stroke="#F1F1F1" stroke-width="1.5" />
<rect x="7" y="568" width="654" height="150" fill="#252526" />
<line x1="7.5" y1="547" x2="7.5" y2="718" stroke="#3F3F46" stroke-width="1" />
<line x1="7" y1="717.5" x2="661" y2="717.5" stroke="#3F3F46" stroke-width="1" />
<line x1="661.5" y1="546" x2="661.5" y2="718" stroke="#252526" stroke-width="1" />
<rect x="8" y="568" width="636" height="19.5" fill="#252526" />
<line x1="8" y1="587.5" x2="644" y2="587.5" stroke="#3F3F46" stroke-width="1" />
<line x1="15.5" y1="568" x2="15.5" y2="587" stroke="#3F3F46" stroke-width="1" />
<line x1="223.75" y1="568" x2="223.75" y2="605" stroke="#3F3F46" stroke-width="1" />
<line x1="538.5" y1="568" x2="538.5" y2="605" stroke="#3F3F46" stroke-width="1" />
<text x="21.25" y="581.5" font-size="12" fill="#F1F1F1" stroke="#F1F1F1" stroke-width="0.22" textLength="31.75" lengthAdjust="spacingAndGlyphs" >Name</text>
<text x="230" y="581.5" font-size="12" fill="#F1F1F1" stroke="#F1F1F1" stroke-width="0.22" textLength="29" lengthAdjust="spacingAndGlyphs" >Value</text>
<text x="544.2" y="581.5" font-size="12" fill="#F1F1F1" stroke="#F1F1F1" stroke-width="0.22" textLength="25.6" lengthAdjust="spacingAndGlyphs" >Type</text>
<rect x="15" y="604.3" width="629" height="1.9" fill="#101010" />
<line x1="15" y1="622.5" x2="644" y2="622.5" stroke="#101010" stroke-width="1" />
<line x1="15.5" y1="606" x2="15.5" y2="622" stroke="#101010" stroke-width="1" />
<line x1="223.75" y1="606" x2="223.75" y2="622" stroke="#101010" stroke-width="1" />
<line x1="538.5" y1="606" x2="538.5" y2="622" stroke="#101010" stroke-width="1" />
<path d="M22.5 594 v7 l3.5 -3.5z" fill="none" stroke="#C8C8C8" stroke-width="1" />
<path d="M35 595 L40.5 592 L45.3 594 V598.5 L40 601 L35 599 Z" fill="#75BEFF" />
<path d="M38.8 595.2 L41.8 593.9" fill="none" stroke="#1E1E1E" stroke-width="1.3" />
<text x="54" y="600.75" font-size="12" fill="#F1F1F1" stroke="#F1F1F1" stroke-width="0.22" textLength="56.5" lengthAdjust="spacingAndGlyphs" >$exception</text>
<text x="229" y="600.75" font-size="12" fill="#F1F1F1" stroke="#F1F1F1" stroke-width="0.22" textLength="307.2" lengthAdjust="spacingAndGlyphs" >{&quot;Impossible de charger le fichier ou l&#x27;assembly &#x27;Lockhee...</text>
<text x="543" y="600.75" font-size="12" fill="#F1F1F1" stroke="#F1F1F1" stroke-width="0.22" textLength="96.5" lengthAdjust="spacingAndGlyphs" >System.BadImag...</text>
<rect x="644" y="568" width="17" height="149.5" fill="#3E3E42" />
<path d="M648 579 l4.5 -5 l4.5 5z" fill="#555555" />
<path d="M648 706 l4.5 5 l4.5 -5z" fill="#555555" />
<rect x="94.5" y="717.5" width="54" height="20" fill="#252526" stroke="#3F3F46" stroke-width="1" />
<rect x="95" y="716" width="53" height="2" fill="#252526" />
<text x="12.4" y="732" font-size="12" fill="#F1F1F1" stroke="#F1F1F1" stroke-width="0.22" textLength="30.6" lengthAdjust="spacingAndGlyphs" >Autos</text>
<text x="55.3" y="732" font-size="12" fill="#F1F1F1" stroke="#F1F1F1" stroke-width="0.22" textLength="32.7" lengthAdjust="spacingAndGlyphs" >Locals</text>
<text x="100" y="732" font-size="12" fill="#0097FB" stroke="#0097FB" stroke-width="0.22" textLength="42" lengthAdjust="spacingAndGlyphs" >Watch 1</text>
<rect x="668" y="547" width="661.5" height="21" fill="#2D2D30" />
<text x="672.5" y="561.5" font-size="12" fill="#F1F1F1" stroke="#F1F1F1" stroke-width="0.22" textLength="50.5" lengthAdjust="spacingAndGlyphs" >Call Stack</text>
<rect x="729" y="555" width="1" height="1" fill="#46464A" />
<rect x="731" y="557" width="1" height="1" fill="#46464A" />
<rect x="729" y="559" width="1" height="1" fill="#46464A" />
<rect x="733" y="555" width="1" height="1" fill="#46464A" />
<rect x="735" y="557" width="1" height="1" fill="#46464A" />
<rect x="733" y="559" width="1" height="1" fill="#46464A" />
<rect x="737" y="555" width="1" height="1" fill="#46464A" />
<rect x="739" y="557" width="1" height="1" fill="#46464A" />
<rect x="737" y="559" width="1" height="1" fill="#46464A" />
<rect x="741" y="555" width="1" height="1" fill="#46464A" />
<rect x="743" y="557" width="1" height="1" fill="#46464A" />
<rect x="741" y="559" width="1" height="1" fill="#46464A" />
<rect x="745" y="555" width="1" height="1" fill="#46464A" />
<rect x="747" y="557" width="1" height="1" fill="#46464A" />
<rect x="745" y="559" width="1" height="1" fill="#46464A" />
<rect x="749" y="555" width="1" height="1" fill="#46464A" />
<rect x="751" y="557" width="1" height="1" fill="#46464A" />
<rect x="749" y="559" width="1" height="1" fill="#46464A" />
<rect x="753" y="555" width="1" height="1" fill="#46464A" />
<rect x="755" y="557" width="1" height="1" fill="#46464A" />
<rect x="753" y="559" width="1" height="1" fill="#46464A" />
<rect x="757" y="555" width="1" height="1" fill="#46464A" />
<rect x="759" y="557" width="1" height="1" fill="#46464A" />
<rect x="757" y="559" width="1" height="1" fill="#46464A" />
<rect x="761" y="555" width="1" height="1" fill="#46464A" />
<rect x="763" y="557" width="1" height="1" fill="#46464A" />
<rect x="761" y="559" width="1" height="1" fill="#46464A" />
<rect x="765" y="555" width="1" height="1" fill="#46464A" />
<rect x="767" y="557" width="1" height="1" fill="#46464A" />
<rect x="765" y="559" width="1" height="1" fill="#46464A" />
<rect x="769" y="555" width="1" height="1" fill="#46464A" />
<rect x="771" y="557" width="1" height="1" fill="#46464A" />
<rect x="769" y="559" width="1" height="1" fill="#46464A" />
<rect x="773" y="555" width="1" height="1" fill="#46464A" />
<rect x="775" y="557" width="1" height="1" fill="#46464A" />
<rect x="773" y="559" width="1" height="1" fill="#46464A" />
<rect x="777" y="555" width="1" height="1" fill="#46464A" />
<rect x="779" y="557" width="1" height="1" fill="#46464A" />
<rect x="777" y="559" width="1" height="1" fill="#46464A" />
<rect x="781" y="555" width="1" height="1" fill="#46464A" />
<rect x="783" y="557" width="1" height="1" fill="#46464A" />
<rect x="781" y="559" width="1" height="1" fill="#46464A" />
<rect x="785" y="555" width="1" height="1" fill="#46464A" />
<rect x="787" y="557" width="1" height="1" fill="#46464A" />
<rect x="785" y="559" width="1" height="1" fill="#46464A" />
<rect x="789" y="555" width="1" height="1" fill="#46464A" />
<rect x="791" y="557" width="1" height="1" fill="#46464A" />
<rect x="789" y="559" width="1" height="1" fill="#46464A" />
<rect x="793" y="555" width="1" height="1" fill="#46464A" />
<rect x="795" y="557" width="1" height="1" fill="#46464A" />
<rect x="793" y="559" width="1" height="1" fill="#46464A" />
<rect x="797" y="555" width="1" height="1" fill="#46464A" />
<rect x="799" y="557" width="1" height="1" fill="#46464A" />
<rect x="797" y="559" width="1" height="1" fill="#46464A" />
<rect x="801" y="555" width="1" height="1" fill="#46464A" />
<rect x="803" y="557" width="1" height="1" fill="#46464A" />
<rect x="801" y="559" width="1" height="1" fill="#46464A" />
<rect x="805" y="555" width="1" height="1" fill="#46464A" />
<rect x="807" y="557" width="1" height="1" fill="#46464A" />
<rect x="805" y="559" width="1" height="1" fill="#46464A" />
<rect x="809" y="555" width="1" height="1" fill="#46464A" />
<rect x="811" y="557" width="1" height="1" fill="#46464A" />
<rect x="809" y="559" width="1" height="1" fill="#46464A" />
<rect x="813" y="555" width="1" height="1" fill="#46464A" />
<rect x="815" y="557" width="1" height="1" fill="#46464A" />
<rect x="813" y="559" width="1" height="1" fill="#46464A" />
<rect x="817" y="555" width="1" height="1" fill="#46464A" />
<rect x="819" y="557" width="1" height="1" fill="#46464A" />
<rect x="817" y="559" width="1" height="1" fill="#46464A" />
<rect x="821" y="555" width="1" height="1" fill="#46464A" />
<rect x="823" y="557" width="1" height="1" fill="#46464A" />
<rect x="821" y="559" width="1" height="1" fill="#46464A" />
<rect x="825" y="555" width="1" height="1" fill="#46464A" />
<rect x="827" y="557" width="1" height="1" fill="#46464A" />
<rect x="825" y="559" width="1" height="1" fill="#46464A" />
<rect x="829" y="555" width="1" height="1" fill="#46464A" />
<rect x="831" y="557" width="1" height="1" fill="#46464A" />
<rect x="829" y="559" width="1" height="1" fill="#46464A" />
<rect x="833" y="555" width="1" height="1" fill="#46464A" />
<rect x="835" y="557" width="1" height="1" fill="#46464A" />
<rect x="833" y="559" width="1" height="1" fill="#46464A" />
<rect x="837" y="555" width="1" height="1" fill="#46464A" />
<rect x="839" y="557" width="1" height="1" fill="#46464A" />
<rect x="837" y="559" width="1" height="1" fill="#46464A" />
<rect x="841" y="555" width="1" height="1" fill="#46464A" />
<rect x="843" y="557" width="1" height="1" fill="#46464A" />
<rect x="841" y="559" width="1" height="1" fill="#46464A" />
<rect x="845" y="555" width="1" height="1" fill="#46464A" />
<rect x="847" y="557" width="1" height="1" fill="#46464A" />
<rect x="845" y="559" width="1" height="1" fill="#46464A" />
<rect x="849" y="555" width="1" height="1" fill="#46464A" />
<rect x="851" y="557" width="1" height="1" fill="#46464A" />
<rect x="849" y="559" width="1" height="1" fill="#46464A" />
<rect x="853" y="555" width="1" height="1" fill="#46464A" />
<rect x="855" y="557" width="1" height="1" fill="#46464A" />
<rect x="853" y="559" width="1" height="1" fill="#46464A" />
<rect x="857" y="555" width="1" height="1" fill="#46464A" />
<rect x="859" y="557" width="1" height="1" fill="#46464A" />
<rect x="857" y="559" width="1" height="1" fill="#46464A" />
<rect x="861" y="555" width="1" height="1" fill="#46464A" />
<rect x="863" y="557" width="1" height="1" fill="#46464A" />
<rect x="861" y="559" width="1" height="1" fill="#46464A" />
<rect x="865" y="555" width="1" height="1" fill="#46464A" />
<rect x="867" y="557" width="1" height="1" fill="#46464A" />
<rect x="865" y="559" width="1" height="1" fill="#46464A" />
<rect x="869" y="555" width="1" height="1" fill="#46464A" />
<rect x="871" y="557" width="1" height="1" fill="#46464A" />
<rect x="869" y="559" width="1" height="1" fill="#46464A" />
<rect x="873" y="555" width="1" height="1" fill="#46464A" />
<rect x="875" y="557" width="1" height="1" fill="#46464A" />
<rect x="873" y="559" width="1" height="1" fill="#46464A" />
<rect x="877" y="555" width="1" height="1" fill="#46464A" />
<rect x="879" y="557" width="1" height="1" fill="#46464A" />
<rect x="877" y="559" width="1" height="1" fill="#46464A" />
<rect x="881" y="555" width="1" height="1" fill="#46464A" />
<rect x="883" y="557" width="1" height="1" fill="#46464A" />
<rect x="881" y="559" width="1" height="1" fill="#46464A" />
<rect x="885" y="555" width="1" height="1" fill="#46464A" />
<rect x="887" y="557" width="1" height="1" fill="#46464A" />
<rect x="885" y="559" width="1" height="1" fill="#46464A" />
<rect x="889" y="555" width="1" height="1" fill="#46464A" />
<rect x="891" y="557" width="1" height="1" fill="#46464A" />
<rect x="889" y="559" width="1" height="1" fill="#46464A" />
<rect x="893" y="555" width="1" height="1" fill="#46464A" />
<rect x="895" y="557" width="1" height="1" fill="#46464A" />
<rect x="893" y="559" width="1" height="1" fill="#46464A" />
<rect x="897" y="555" width="1" height="1" fill="#46464A" />
<rect x="899" y="557" width="1" height="1" fill="#46464A" />
<rect x="897" y="559" width="1" height="1" fill="#46464A" />
<rect x="901" y="555" width="1" height="1" fill="#46464A" />
<rect x="903" y="557" width="1" height="1" fill="#46464A" />
<rect x="901" y="559" width="1" height="1" fill="#46464A" />
<rect x="905" y="555" width="1" height="1" fill="#46464A" />
<rect x="907" y="557" width="1" height="1" fill="#46464A" />
<rect x="905" y="559" width="1" height="1" fill="#46464A" />
<rect x="909" y="555" width="1" height="1" fill="#46464A" />
<rect x="911" y="557" width="1" height="1" fill="#46464A" />
<rect x="909" y="559" width="1" height="1" fill="#46464A" />
<rect x="913" y="555" width="1" height="1" fill="#46464A" />
<rect x="915" y="557" width="1" height="1" fill="#46464A" />
<rect x="913" y="559" width="1" height="1" fill="#46464A" />
<rect x="917" y="555" width="1" height="1" fill="#46464A" />
<rect x="919" y="557" width="1" height="1" fill="#46464A" />
<rect x="917" y="559" width="1" height="1" fill="#46464A" />
<rect x="921" y="555" width="1" height="1" fill="#46464A" />
<rect x="923" y="557" width="1" height="1" fill="#46464A" />
<rect x="921" y="559" width="1" height="1" fill="#46464A" />
<rect x="925" y="555" width="1" height="1" fill="#46464A" />
<rect x="927" y="557" width="1" height="1" fill="#46464A" />
<rect x="925" y="559" width="1" height="1" fill="#46464A" />
<rect x="929" y="555" width="1" height="1" fill="#46464A" />
<rect x="931" y="557" width="1" height="1" fill="#46464A" />
<rect x="929" y="559" width="1" height="1" fill="#46464A" />
<rect x="933" y="555" width="1" height="1" fill="#46464A" />
<rect x="935" y="557" width="1" height="1" fill="#46464A" />
<rect x="933" y="559" width="1" height="1" fill="#46464A" />
<rect x="937" y="555" width="1" height="1" fill="#46464A" />
<rect x="939" y="557" width="1" height="1" fill="#46464A" />
<rect x="937" y="559" width="1" height="1" fill="#46464A" />
<rect x="941" y="555" width="1" height="1" fill="#46464A" />
<rect x="943" y="557" width="1" height="1" fill="#46464A" />
<rect x="941" y="559" width="1" height="1" fill="#46464A" />
<rect x="945" y="555" width="1" height="1" fill="#46464A" />
<rect x="947" y="557" width="1" height="1" fill="#46464A" />
<rect x="945" y="559" width="1" height="1" fill="#46464A" />
<rect x="949" y="555" width="1" height="1" fill="#46464A" />
<rect x="951" y="557" width="1" height="1" fill="#46464A" />
<rect x="949" y="559" width="1" height="1" fill="#46464A" />
<rect x="953" y="555" width="1" height="1" fill="#46464A" />
<rect x="955" y="557" width="1" height="1" fill="#46464A" />
<rect x="953" y="559" width="1" height="1" fill="#46464A" />
<rect x="957" y="555" width="1" height="1" fill="#46464A" />
<rect x="959" y="557" width="1" height="1" fill="#46464A" />
<rect x="957" y="559" width="1" height="1" fill="#46464A" />
<rect x="961" y="555" width="1" height="1" fill="#46464A" />
<rect x="963" y="557" width="1" height="1" fill="#46464A" />
<rect x="961" y="559" width="1" height="1" fill="#46464A" />
<rect x="965" y="555" width="1" height="1" fill="#46464A" />
<rect x="967" y="557" width="1" height="1" fill="#46464A" />
<rect x="965" y="559" width="1" height="1" fill="#46464A" />
<rect x="969" y="555" width="1" height="1" fill="#46464A" />
<rect x="971" y="557" width="1" height="1" fill="#46464A" />
<rect x="969" y="559" width="1" height="1" fill="#46464A" />
<rect x="973" y="555" width="1" height="1" fill="#46464A" />
<rect x="975" y="557" width="1" height="1" fill="#46464A" />
<rect x="973" y="559" width="1" height="1" fill="#46464A" />
<rect x="977" y="555" width="1" height="1" fill="#46464A" />
<rect x="979" y="557" width="1" height="1" fill="#46464A" />
<rect x="977" y="559" width="1" height="1" fill="#46464A" />
<rect x="981" y="555" width="1" height="1" fill="#46464A" />
<rect x="983" y="557" width="1" height="1" fill="#46464A" />
<rect x="981" y="559" width="1" height="1" fill="#46464A" />
<rect x="985" y="555" width="1" height="1" fill="#46464A" />
<rect x="987" y="557" width="1" height="1" fill="#46464A" />
<rect x="985" y="559" width="1" height="1" fill="#46464A" />
<rect x="989" y="555" width="1" height="1" fill="#46464A" />
<rect x="991" y="557" width="1" height="1" fill="#46464A" />
<rect x="989" y="559" width="1" height="1" fill="#46464A" />
<rect x="993" y="555" width="1" height="1" fill="#46464A" />
<rect x="995" y="557" width="1" height="1" fill="#46464A" />
<rect x="993" y="559" width="1" height="1" fill="#46464A" />
<rect x="997" y="555" width="1" height="1" fill="#46464A" />
<rect x="999" y="557" width="1" height="1" fill="#46464A" />
<rect x="997" y="559" width="1" height="1" fill="#46464A" />
<rect x="1001" y="555" width="1" height="1" fill="#46464A" />
<rect x="1003" y="557" width="1" height="1" fill="#46464A" />
<rect x="1001" y="559" width="1" height="1" fill="#46464A" />
<rect x="1005" y="555" width="1" height="1" fill="#46464A" />
<rect x="1007" y="557" width="1" height="1" fill="#46464A" />
<rect x="1005" y="559" width="1" height="1" fill="#46464A" />
<rect x="1009" y="555" width="1" height="1" fill="#46464A" />
<rect x="1011" y="557" width="1" height="1" fill="#46464A" />
<rect x="1009" y="559" width="1" height="1" fill="#46464A" />
<rect x="1013" y="555" width="1" height="1" fill="#46464A" />
<rect x="1015" y="557" width="1" height="1" fill="#46464A" />
<rect x="1013" y="559" width="1" height="1" fill="#46464A" />
<rect x="1017" y="555" width="1" height="1" fill="#46464A" />
<rect x="1019" y="557" width="1" height="1" fill="#46464A" />
<rect x="1017" y="559" width="1" height="1" fill="#46464A" />
<rect x="1021" y="555" width="1" height="1" fill="#46464A" />
<rect x="1023" y="557" width="1" height="1" fill="#46464A" />
<rect x="1021" y="559" width="1" height="1" fill="#46464A" />
<rect x="1025" y="555" width="1" height="1" fill="#46464A" />
<rect x="1027" y="557" width="1" height="1" fill="#46464A" />
<rect x="1025" y="559" width="1" height="1" fill="#46464A" />
<rect x="1029" y="555" width="1" height="1" fill="#46464A" />
<rect x="1031" y="557" width="1" height="1" fill="#46464A" />
<rect x="1029" y="559" width="1" height="1" fill="#46464A" />
<rect x="1033" y="555" width="1" height="1" fill="#46464A" />
<rect x="1035" y="557" width="1" height="1" fill="#46464A" />
<rect x="1033" y="559" width="1" height="1" fill="#46464A" />
<rect x="1037" y="555" width="1" height="1" fill="#46464A" />
<rect x="1039" y="557" width="1" height="1" fill="#46464A" />
<rect x="1037" y="559" width="1" height="1" fill="#46464A" />
<rect x="1041" y="555" width="1" height="1" fill="#46464A" />
<rect x="1043" y="557" width="1" height="1" fill="#46464A" />
<rect x="1041" y="559" width="1" height="1" fill="#46464A" />
<rect x="1045" y="555" width="1" height="1" fill="#46464A" />
<rect x="1047" y="557" width="1" height="1" fill="#46464A" />
<rect x="1045" y="559" width="1" height="1" fill="#46464A" />
<rect x="1049" y="555" width="1" height="1" fill="#46464A" />
<rect x="1051" y="557" width="1" height="1" fill="#46464A" />
<rect x="1049" y="559" width="1" height="1" fill="#46464A" />
<rect x="1053" y="555" width="1" height="1" fill="#46464A" />
<rect x="1055" y="557" width="1" height="1" fill="#46464A" />
<rect x="1053" y="559" width="1" height="1" fill="#46464A" />
<rect x="1057" y="555" width="1" height="1" fill="#46464A" />
<rect x="1059" y="557" width="1" height="1" fill="#46464A" />
<rect x="1057" y="559" width="1" height="1" fill="#46464A" />
<rect x="1061" y="555" width="1" height="1" fill="#46464A" />
<rect x="1063" y="557" width="1" height="1" fill="#46464A" />
<rect x="1061" y="559" width="1" height="1" fill="#46464A" />
<rect x="1065" y="555" width="1" height="1" fill="#46464A" />
<rect x="1067" y="557" width="1" height="1" fill="#46464A" />
<rect x="1065" y="559" width="1" height="1" fill="#46464A" />
<rect x="1069" y="555" width="1" height="1" fill="#46464A" />
<rect x="1071" y="557" width="1" height="1" fill="#46464A" />
<rect x="1069" y="559" width="1" height="1" fill="#46464A" />
<rect x="1073" y="555" width="1" height="1" fill="#46464A" />
<rect x="1075" y="557" width="1" height="1" fill="#46464A" />
<rect x="1073" y="559" width="1" height="1" fill="#46464A" />
<rect x="1077" y="555" width="1" height="1" fill="#46464A" />
<rect x="1079" y="557" width="1" height="1" fill="#46464A" />
<rect x="1077" y="559" width="1" height="1" fill="#46464A" />
<rect x="1081" y="555" width="1" height="1" fill="#46464A" />
<rect x="1083" y="557" width="1" height="1" fill="#46464A" />
<rect x="1081" y="559" width="1" height="1" fill="#46464A" />
<rect x="1085" y="555" width="1" height="1" fill="#46464A" />
<rect x="1087" y="557" width="1" height="1" fill="#46464A" />
<rect x="1085" y="559" width="1" height="1" fill="#46464A" />
<rect x="1089" y="555" width="1" height="1" fill="#46464A" />
<rect x="1091" y="557" width="1" height="1" fill="#46464A" />
<rect x="1089" y="559" width="1" height="1" fill="#46464A" />
<rect x="1093" y="555" width="1" height="1" fill="#46464A" />
<rect x="1095" y="557" width="1" height="1" fill="#46464A" />
<rect x="1093" y="559" width="1" height="1" fill="#46464A" />
<rect x="1097" y="555" width="1" height="1" fill="#46464A" />
<rect x="1099" y="557" width="1" height="1" fill="#46464A" />
<rect x="1097" y="559" width="1" height="1" fill="#46464A" />
<rect x="1101" y="555" width="1" height="1" fill="#46464A" />
<rect x="1103" y="557" width="1" height="1" fill="#46464A" />
<rect x="1101" y="559" width="1" height="1" fill="#46464A" />
<rect x="1105" y="555" width="1" height="1" fill="#46464A" />
<rect x="1107" y="557" width="1" height="1" fill="#46464A" />
<rect x="1105" y="559" width="1" height="1" fill="#46464A" />
<rect x="1109" y="555" width="1" height="1" fill="#46464A" />
<rect x="1111" y="557" width="1" height="1" fill="#46464A" />
<rect x="1109" y="559" width="1" height="1" fill="#46464A" />
<rect x="1113" y="555" width="1" height="1" fill="#46464A" />
<rect x="1115" y="557" width="1" height="1" fill="#46464A" />
<rect x="1113" y="559" width="1" height="1" fill="#46464A" />
<rect x="1117" y="555" width="1" height="1" fill="#46464A" />
<rect x="1119" y="557" width="1" height="1" fill="#46464A" />
<rect x="1117" y="559" width="1" height="1" fill="#46464A" />
<rect x="1121" y="555" width="1" height="1" fill="#46464A" />
<rect x="1123" y="557" width="1" height="1" fill="#46464A" />
<rect x="1121" y="559" width="1" height="1" fill="#46464A" />
<rect x="1125" y="555" width="1" height="1" fill="#46464A" />
<rect x="1127" y="557" width="1" height="1" fill="#46464A" />
<rect x="1125" y="559" width="1" height="1" fill="#46464A" />
<rect x="1129" y="555" width="1" height="1" fill="#46464A" />
<rect x="1131" y="557" width="1" height="1" fill="#46464A" />
<rect x="1129" y="559" width="1" height="1" fill="#46464A" />
<rect x="1133" y="555" width="1" height="1" fill="#46464A" />
<rect x="1135" y="557" width="1" height="1" fill="#46464A" />
<rect x="1133" y="559" width="1" height="1" fill="#46464A" />
<rect x="1137" y="555" width="1" height="1" fill="#46464A" />
<rect x="1139" y="557" width="1" height="1" fill="#46464A" />
<rect x="1137" y="559" width="1" height="1" fill="#46464A" />
<rect x="1141" y="555" width="1" height="1" fill="#46464A" />
<rect x="1143" y="557" width="1" height="1" fill="#46464A" />
<rect x="1141" y="559" width="1" height="1" fill="#46464A" />
<rect x="1145" y="555" width="1" height="1" fill="#46464A" />
<rect x="1147" y="557" width="1" height="1" fill="#46464A" />
<rect x="1145" y="559" width="1" height="1" fill="#46464A" />
<rect x="1149" y="555" width="1" height="1" fill="#46464A" />
<rect x="1151" y="557" width="1" height="1" fill="#46464A" />
<rect x="1149" y="559" width="1" height="1" fill="#46464A" />
<rect x="1153" y="555" width="1" height="1" fill="#46464A" />
<rect x="1155" y="557" width="1" height="1" fill="#46464A" />
<rect x="1153" y="559" width="1" height="1" fill="#46464A" />
<rect x="1157" y="555" width="1" height="1" fill="#46464A" />
<rect x="1159" y="557" width="1" height="1" fill="#46464A" />
<rect x="1157" y="559" width="1" height="1" fill="#46464A" />
<rect x="1161" y="555" width="1" height="1" fill="#46464A" />
<rect x="1163" y="557" width="1" height="1" fill="#46464A" />
<rect x="1161" y="559" width="1" height="1" fill="#46464A" />
<rect x="1165" y="555" width="1" height="1" fill="#46464A" />
<rect x="1167" y="557" width="1" height="1" fill="#46464A" />
<rect x="1165" y="559" width="1" height="1" fill="#46464A" />
<rect x="1169" y="555" width="1" height="1" fill="#46464A" />
<rect x="1171" y="557" width="1" height="1" fill="#46464A" />
<rect x="1169" y="559" width="1" height="1" fill="#46464A" />
<rect x="1173" y="555" width="1" height="1" fill="#46464A" />
<rect x="1175" y="557" width="1" height="1" fill="#46464A" />
<rect x="1173" y="559" width="1" height="1" fill="#46464A" />
<rect x="1177" y="555" width="1" height="1" fill="#46464A" />
<rect x="1179" y="557" width="1" height="1" fill="#46464A" />
<rect x="1177" y="559" width="1" height="1" fill="#46464A" />
<rect x="1181" y="555" width="1" height="1" fill="#46464A" />
<rect x="1183" y="557" width="1" height="1" fill="#46464A" />
<rect x="1181" y="559" width="1" height="1" fill="#46464A" />
<rect x="1185" y="555" width="1" height="1" fill="#46464A" />
<rect x="1187" y="557" width="1" height="1" fill="#46464A" />
<rect x="1185" y="559" width="1" height="1" fill="#46464A" />
<rect x="1189" y="555" width="1" height="1" fill="#46464A" />
<rect x="1191" y="557" width="1" height="1" fill="#46464A" />
<rect x="1189" y="559" width="1" height="1" fill="#46464A" />
<rect x="1193" y="555" width="1" height="1" fill="#46464A" />
<rect x="1195" y="557" width="1" height="1" fill="#46464A" />
<rect x="1193" y="559" width="1" height="1" fill="#46464A" />
<rect x="1197" y="555" width="1" height="1" fill="#46464A" />
<rect x="1199" y="557" width="1" height="1" fill="#46464A" />
<rect x="1197" y="559" width="1" height="1" fill="#46464A" />
<rect x="1201" y="555" width="1" height="1" fill="#46464A" />
<rect x="1203" y="557" width="1" height="1" fill="#46464A" />
<rect x="1201" y="559" width="1" height="1" fill="#46464A" />
<rect x="1205" y="555" width="1" height="1" fill="#46464A" />
<rect x="1207" y="557" width="1" height="1" fill="#46464A" />
<rect x="1205" y="559" width="1" height="1" fill="#46464A" />
<rect x="1209" y="555" width="1" height="1" fill="#46464A" />
<rect x="1211" y="557" width="1" height="1" fill="#46464A" />
<rect x="1209" y="559" width="1" height="1" fill="#46464A" />
<rect x="1213" y="555" width="1" height="1" fill="#46464A" />
<rect x="1215" y="557" width="1" height="1" fill="#46464A" />
<rect x="1213" y="559" width="1" height="1" fill="#46464A" />
<rect x="1217" y="555" width="1" height="1" fill="#46464A" />
<rect x="1219" y="557" width="1" height="1" fill="#46464A" />
<rect x="1217" y="559" width="1" height="1" fill="#46464A" />
<rect x="1221" y="555" width="1" height="1" fill="#46464A" />
<rect x="1223" y="557" width="1" height="1" fill="#46464A" />
<rect x="1221" y="559" width="1" height="1" fill="#46464A" />
<rect x="1225" y="555" width="1" height="1" fill="#46464A" />
<rect x="1227" y="557" width="1" height="1" fill="#46464A" />
<rect x="1225" y="559" width="1" height="1" fill="#46464A" />
<rect x="1229" y="555" width="1" height="1" fill="#46464A" />
<rect x="1231" y="557" width="1" height="1" fill="#46464A" />
<rect x="1229" y="559" width="1" height="1" fill="#46464A" />
<rect x="1233" y="555" width="1" height="1" fill="#46464A" />
<rect x="1235" y="557" width="1" height="1" fill="#46464A" />
<rect x="1233" y="559" width="1" height="1" fill="#46464A" />
<rect x="1237" y="555" width="1" height="1" fill="#46464A" />
<rect x="1239" y="557" width="1" height="1" fill="#46464A" />
<rect x="1237" y="559" width="1" height="1" fill="#46464A" />
<rect x="1241" y="555" width="1" height="1" fill="#46464A" />
<rect x="1243" y="557" width="1" height="1" fill="#46464A" />
<rect x="1241" y="559" width="1" height="1" fill="#46464A" />
<rect x="1245" y="555" width="1" height="1" fill="#46464A" />
<rect x="1247" y="557" width="1" height="1" fill="#46464A" />
<rect x="1245" y="559" width="1" height="1" fill="#46464A" />
<rect x="1249" y="555" width="1" height="1" fill="#46464A" />
<rect x="1251" y="557" width="1" height="1" fill="#46464A" />
<rect x="1249" y="559" width="1" height="1" fill="#46464A" />
<rect x="1253" y="555" width="1" height="1" fill="#46464A" />
<rect x="1255" y="557" width="1" height="1" fill="#46464A" />
<rect x="1253" y="559" width="1" height="1" fill="#46464A" />
<rect x="1257" y="555" width="1" height="1" fill="#46464A" />
<rect x="1259" y="557" width="1" height="1" fill="#46464A" />
<rect x="1257" y="559" width="1" height="1" fill="#46464A" />
<rect x="1261" y="555" width="1" height="1" fill="#46464A" />
<rect x="1263" y="557" width="1" height="1" fill="#46464A" />
<rect x="1261" y="559" width="1" height="1" fill="#46464A" />
<rect x="1265" y="555" width="1" height="1" fill="#46464A" />
<rect x="1267" y="557" width="1" height="1" fill="#46464A" />
<rect x="1265" y="559" width="1" height="1" fill="#46464A" />
<rect x="1269" y="555" width="1" height="1" fill="#46464A" />
<rect x="1271" y="557" width="1" height="1" fill="#46464A" />
<rect x="1269" y="559" width="1" height="1" fill="#46464A" />
<rect x="1273" y="555" width="1" height="1" fill="#46464A" />
<rect x="1275" y="557" width="1" height="1" fill="#46464A" />
<rect x="1273" y="559" width="1" height="1" fill="#46464A" />
<rect x="1277" y="555" width="1" height="1" fill="#46464A" />
<rect x="1279" y="557" width="1" height="1" fill="#46464A" />
<rect x="1277" y="559" width="1" height="1" fill="#46464A" />
<path d="M1281.5 555 h7.5 l-3.75 4z" fill="#F1F1F1" />
<path d="M1298.5 553.5 h5.5 M1299.5 553.5 v5.5 M1303.0 553.5 v5.5 M1297.0 559 h8.5 M1301.25 559 v5" fill="none" stroke="#F1F1F1" stroke-width="1.2" />
<path d="M1313.5 553.5 L1322.5 562 M1322.5 553.5 L1313.5 562" fill="none" stroke="#F1F1F1" stroke-width="1.5" />
<rect x="668" y="568" width="661.5" height="150" fill="#252526" />
<line x1="668.5" y1="547" x2="668.5" y2="718" stroke="#3F3F46" stroke-width="1" />
<line x1="668" y1="717.5" x2="1329.5" y2="717.5" stroke="#3F3F46" stroke-width="1" />
<line x1="670" y1="587.5" x2="1312" y2="587.5" stroke="#3F3F46" stroke-width="1" />
<line x1="685.5" y1="568" x2="685.5" y2="605" stroke="#3F3F46" stroke-width="1" />
<line x1="1282.5" y1="568" x2="1282.5" y2="605" stroke="#3F3F46" stroke-width="1" />
<text x="691.25" y="581.5" font-size="12" fill="#F1F1F1" stroke="#F1F1F1" stroke-width="0.22" textLength="31.75" lengthAdjust="spacingAndGlyphs" >Name</text>
<text x="1287.8" y="581.5" font-size="12" fill="#F1F1F1" stroke="#F1F1F1" stroke-width="0.22" textLength="23.8" lengthAdjust="spacingAndGlyphs" >Lang</text>
<rect x="670" y="604.3" width="642" height="1.9" fill="#101010" />
<path d="M672 594.5 h5 v-2.5 l6 4.5 l-6 4.5 v-2.5 h-5z" fill="#F7D44C" />
<text x="690" y="600.5" font-size="12" fill="#F1F1F1" stroke="#F1F1F1" stroke-width="0.22" textLength="346.2" lengthAdjust="spacingAndGlyphs" >temp sim connect.exe!temp_sim_connect.Program.Main() Line 19</text>
<text x="1287.5" y="600.5" font-size="12" fill="#F1F1F1" stroke="#F1F1F1" stroke-width="0.22" textLength="15.1" lengthAdjust="spacingAndGlyphs" >C#</text>
<rect x="1311.5" y="568" width="17.5" height="149.5" fill="#3E3E42" />
<path d="M1316 579 l4.5 -5 l4.5 5z" fill="#555555" />
<path d="M1316 706 l4.5 5 l4.5 -5z" fill="#555555" />
<rect x="668.5" y="717.5" width="62" height="20" fill="#252526" stroke="#3F3F46" stroke-width="1" />
<rect x="669" y="716" width="61" height="2" fill="#252526" />
<text x="674.2" y="732" font-size="12" fill="#0097FB" stroke="#0097FB" stroke-width="0.22" textLength="50.5" lengthAdjust="spacingAndGlyphs" >Call Stack</text>
<text x="737.2" y="732" font-size="12" fill="#F1F1F1" stroke="#F1F1F1" stroke-width="0.22" textLength="61.7" lengthAdjust="spacingAndGlyphs" >Breakpoints</text>
<text x="811.3" y="732" font-size="12" fill="#F1F1F1" stroke="#F1F1F1" stroke-width="0.22" textLength="95.6" lengthAdjust="spacingAndGlyphs" >Exception Settings</text>
<text x="919" y="732" font-size="12" fill="#F1F1F1" stroke="#F1F1F1" stroke-width="0.22" textLength="104" lengthAdjust="spacingAndGlyphs" >Command Window</text>
<text x="1035" y="732" font-size="12" fill="#F1F1F1" stroke="#F1F1F1" stroke-width="0.22" textLength="103.9" lengthAdjust="spacingAndGlyphs" >Immediate Window</text>
<text x="1151.3" y="732" font-size="12" fill="#F1F1F1" stroke="#F1F1F1" stroke-width="0.22" textLength="37.7" lengthAdjust="spacingAndGlyphs" >Output</text>
<rect x="0" y="744" width="1360" height="22" fill="#CA5100" />
<path d="M7.6 752 H19.8 L17.2 761.6 H4.9 Z" fill="none" stroke="#FFFFFF" stroke-width="1.3" />
<text x="28.2" y="760" font-size="12" fill="#FFFFFF" stroke="#FFFFFF" stroke-width="0.22" textLength="31.8" lengthAdjust="spacingAndGlyphs" >Ready</text>
<path d="M1194.4 756.5 L1199.2 750.8 L1204 756.5 Z" fill="#E8E8E8" />
<rect x="1198.1" y="755" width="2.3" height="7.2" fill="#E8E8E8" />
<text x="1213" y="759.6" font-size="12" fill="#FFFFFF" stroke="#FFFFFF" stroke-width="0.22" textLength="117.3" lengthAdjust="spacingAndGlyphs" >Add to Source Control</text>
<path d="M1337.7 758 l3.5 -4 l3.5 4z" fill="#FFFFFF" />
<rect x="0" y="766" width="1360" height="2" fill="#675C3C" />
<rect x="52" y="766" width="50" height="2" fill="#C9C3B0" />
<rect x="104" y="766" width="2" height="2" fill="#C9C3B0" />
<rect x="108" y="766" width="2" height="2" fill="#C9C3B0" />
<rect x="114" y="766" width="58.5" height="2" fill="#C9C3B0" />
<rect x="176" y="766" width="58" height="2" fill="#C9C3B0" />
<rect x="237" y="766" width="58" height="2" fill="#C9C3B0" />
<rect x="361" y="766" width="59" height="2" fill="#C9C3B0" />
<rect x="424" y="766" width="58" height="2" fill="#C9C3B0" />
<rect x="486" y="766" width="58.5" height="2" fill="#C9C3B0" />
<rect x="547.5" y="766" width="58.5" height="2" fill="#F4F4F4" /></svg></body></html>
